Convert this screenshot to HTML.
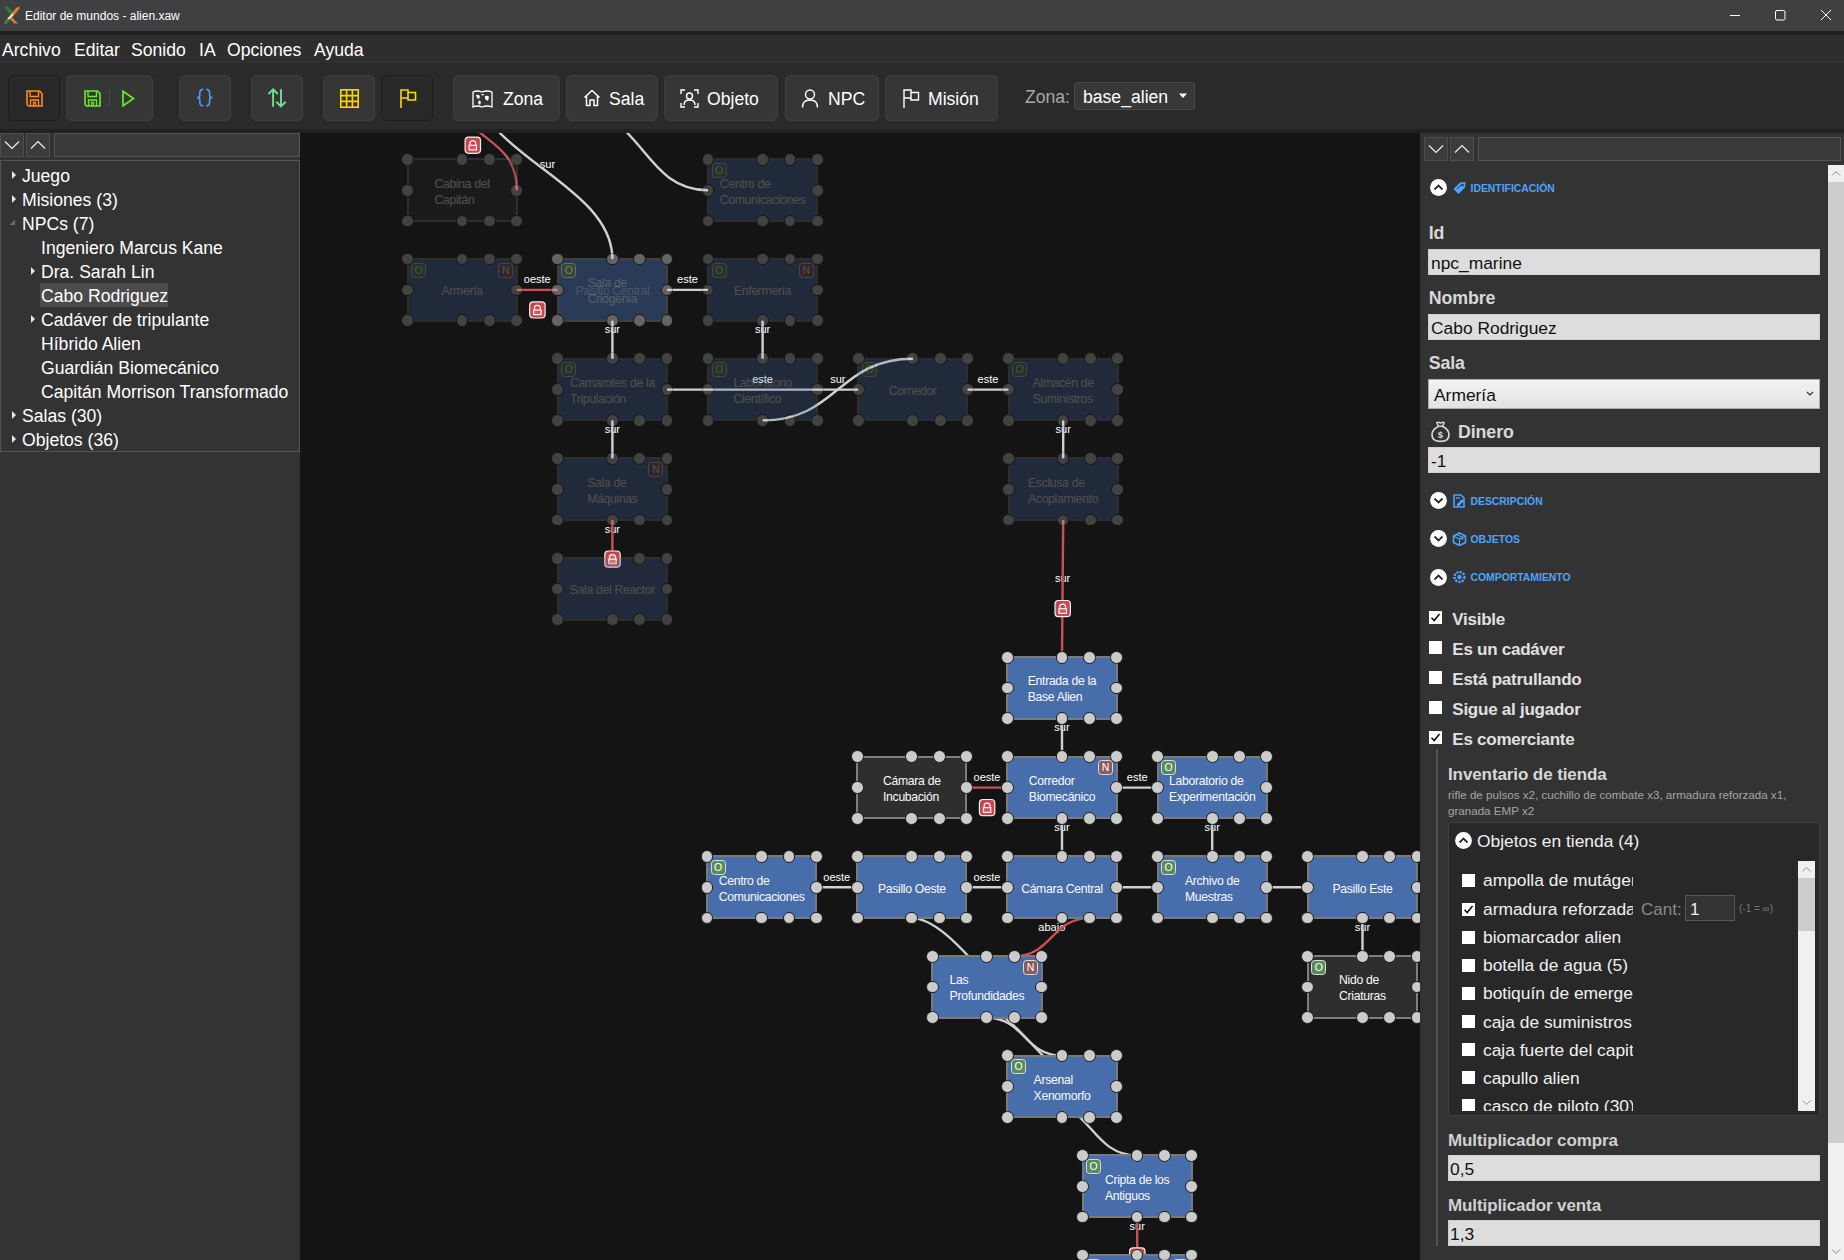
<!DOCTYPE html><html><head><meta charset="utf-8"><style>
*{box-sizing:border-box}
html,body{margin:0;padding:0}
body{width:1844px;height:1260px;overflow:hidden;position:relative;background:#141414;font-family:"Liberation Sans", sans-serif;color:#fff}
.a{position:absolute}
.t{position:absolute;white-space:pre;line-height:1}
</style></head><body>

<div class="a" style="left:0;top:0;width:1844px;height:31px;background:#3f4042"></div>
<div class="a" style="left:0;top:31px;width:1844px;height:4px;background:#1f1f1f"></div>
<svg class="a" style="left:3px;top:5px" width="18" height="20" viewBox="0 0 18 20">
<path d="M1 1.5 L5 1.5 L12 9 L9 12 Z" fill="#2e7d46"/>
<path d="M9 12 L13 16.5 L15.5 18.5 L11 18.5 L6.5 13 Z" fill="#e07a35"/>
<path d="M16 1.5 L17 3 L8 14 L4 18.5 L1 18.5 L3 15 L13 3 Z" fill="#e07a35"/>
<path d="M3 16.5 L10 9" stroke="#fff" stroke-width="1.2"/>
<path d="M1 18.5 L4 14 L8 14.5 L4 18.5 Z" fill="#2e7d46"/>
</svg>
<div class="t" style="left:25px;top:9.6px;font-size:12px;color:#fff">Editor de mundos - alien.xaw</div>
<svg class="a" style="left:1720px;top:0" width="124" height="31" viewBox="1720 0 124 31">
<line x1="1730" y1="15.5" x2="1740" y2="15.5" stroke="#fff" stroke-width="1"/>
<rect x="1775.5" y="10.5" width="9.5" height="9.5" rx="1.5" fill="none" stroke="#fff" stroke-width="1"/>
<path d="M1821 10 L1831 20 M1831 10 L1821 20" stroke="#fff" stroke-width="1"/>
</svg>
<div class="a" style="left:0;top:35px;width:1844px;height:28px;background:#2e2e2e"></div>
<div class="t" style="left:2px;top:42px;font-size:17.6px;color:#fff">Archivo</div>
<div class="t" style="left:74px;top:42px;font-size:17.6px;color:#fff">Editar</div>
<div class="t" style="left:131px;top:42px;font-size:17.6px;color:#fff">Sonido</div>
<div class="t" style="left:199px;top:42px;font-size:17.6px;color:#fff">IA</div>
<div class="t" style="left:227px;top:42px;font-size:17.6px;color:#fff">Opciones</div>
<div class="t" style="left:314px;top:42px;font-size:17.6px;color:#fff">Ayuda</div>
<div class="a" style="left:0;top:63px;width:1844px;height:66px;background:#2a2a2a"></div>
<div class="a" style="left:0;top:129px;width:1844px;height:4px;background:#212121"></div>
<div class="a" style="left:8px;top:75px;width:52px;height:46px;background:#282828;border:1px solid #1d1d1d;border-radius:5px"></div>
<div class="a" style="left:66px;top:75px;width:87px;height:46px;background:#363636;border:1px solid #3e3e3e;border-radius:5px"></div>
<div class="a" style="left:179px;top:75px;width:52px;height:46px;background:#363636;border:1px solid #3e3e3e;border-radius:5px"></div>
<div class="a" style="left:251px;top:75px;width:52px;height:46px;background:#363636;border:1px solid #3e3e3e;border-radius:5px"></div>
<div class="a" style="left:323px;top:75px;width:52px;height:46px;background:#363636;border:1px solid #3e3e3e;border-radius:5px"></div>
<div class="a" style="left:381px;top:75px;width:52px;height:46px;background:#282828;border:1px solid #1d1d1d;border-radius:5px"></div>
<div class="a" style="left:453px;top:75px;width:107px;height:46px;background:#363636;border:1px solid #3e3e3e;border-radius:5px"></div>
<div class="a" style="left:566px;top:75px;width:92px;height:46px;background:#363636;border:1px solid #3e3e3e;border-radius:5px"></div>
<div class="a" style="left:664px;top:75px;width:114px;height:46px;background:#363636;border:1px solid #3e3e3e;border-radius:5px"></div>
<div class="a" style="left:785px;top:75px;width:94px;height:46px;background:#363636;border:1px solid #3e3e3e;border-radius:5px"></div>
<div class="a" style="left:885px;top:75px;width:113px;height:46px;background:#363636;border:1px solid #3e3e3e;border-radius:5px"></div>
<svg class="a" style="left:26px;top:90px" width="17" height="17" viewBox="0 0 17 17">
<path d="M1 1 H13.5 L16 3.5 V16 H2.5 L1 14.5 Z" fill="none" stroke="#ff8c1a" stroke-width="1.6"/>
<path d="M4 1 V6.5 H12.5 V1" fill="none" stroke="#ff8c1a" stroke-width="1.4"/>
<path d="M4.5 16 V10 H12.5 V16 M7.5 16 V12.5 H9.5 V16" fill="none" stroke="#ff8c1a" stroke-width="1.3"/>
</svg>
<svg class="a" style="left:84px;top:90px" width="17" height="17" viewBox="0 0 17 17">
<path d="M1 1 H13.5 L16 3.5 V16 H2.5 L1 14.5 Z" fill="none" stroke="#66ee22" stroke-width="1.6"/>
<path d="M4 1 V6.5 H12.5 V1" fill="none" stroke="#66ee22" stroke-width="1.4"/>
<path d="M4.5 16 V10 H12.5 V16 M7.5 16 V12.5 H9.5 V16" fill="none" stroke="#66ee22" stroke-width="1.3"/>
</svg>
<div class="a" style="left:109px;top:89px;width:1px;height:18px;background:#4a4a4a"></div>
<svg class="a" style="left:122px;top:90px" width="13" height="17" viewBox="0 0 13 17"><path d="M1 1.2 L11.5 8.5 L1 15.8 Z" fill="none" stroke="#66ee22" stroke-width="1.7" stroke-linejoin="miter"/></svg>
<svg class="a" style="left:194px;top:87px" width="22" height="22" viewBox="194 87 22 22">
<path d="M203.2 89.4 Q199.8 89.6 199.8 93 V95.5 Q199.8 97.6 197 97.6 Q199.8 97.6 199.8 99.7 V102.2 Q199.8 105.6 203.2 105.8" fill="none" stroke="#4f94f5" stroke-width="1.7"/>
<path d="M206.2 89.4 Q209.6 89.6 209.6 93 V95.5 Q209.6 97.6 212.4 97.6 Q209.6 97.6 209.6 99.7 V102.2 Q209.6 105.6 206.2 105.8" fill="none" stroke="#4f94f5" stroke-width="1.7"/>
</svg>
<svg class="a" style="left:264px;top:85px" width="26" height="26" viewBox="264 85 26 26">
<path d="M273.1 106.7 V90 M268.4 94 L273.1 89.4 L277.8 94" fill="none" stroke="#6fe08c" stroke-width="1.9"/>
<path d="M281 89.2 V106 M276.3 101.8 L281 106.4 L285.7 101.8" fill="none" stroke="#6fe08c" stroke-width="1.9"/>
</svg>
<svg class="a" style="left:340px;top:89px" width="19" height="19" viewBox="0 0 19 19">
<rect x="0.8" y="0.8" width="17.4" height="17.4" fill="none" stroke="#ffd500" stroke-width="1.6"/>
<path d="M6.6 0.8 V18.2 M12.4 0.8 V18.2 M0.8 6.6 H18.2 M0.8 12.4 H18.2" stroke="#ffd500" stroke-width="1.6"/>
</svg>
<svg class="a" style="left:400px;top:89px" width="17" height="19" viewBox="0 0 17 19">
<path d="M1 19 V1 H8 V3.5 H15.5 V11 H8 V9 H1" fill="none" stroke="#ffd500" stroke-width="1.6"/>
<path d="M8 3.5 V9" stroke="#ffd500" stroke-width="1.6"/>
</svg>
<svg class="a" style="left:472px;top:90px" width="21" height="19" viewBox="0 0 21 19">
<path d="M1 2 Q5 0 10 2 Q15 0 20 2 V17 Q15 15 10 17 Q5 15 1 17 Z" fill="none" stroke="#fff" stroke-width="1.3"/>
<path d="M4 5 Q6 4 8 6 L7 9 L5 8 Z M9 4 L12 4 L11 6 Z M13 6 Q16 5 17 7 L16 11 L13 9 Z M7 10 L9 12 L8 15 L6 13 Z" fill="#fff"/>
</svg>
<div class="t" style="left:503px;top:91px;font-size:17.6px">Zona</div>
<svg class="a" style="left:583px;top:89px" width="18" height="18" viewBox="0 0 18 18">
<path d="M1.5 8.5 L9 1.5 L16.5 8.5 M3.5 7 V16.5 H7 V11 H11 V16.5 H14.5 V7" fill="none" stroke="#fff" stroke-width="1.5" stroke-linejoin="round"/>
</svg>
<div class="t" style="left:609px;top:91px;font-size:17.6px">Sala</div>
<svg class="a" style="left:680px;top:89px" width="19" height="19" viewBox="0 0 19 19">
<path d="M1 5 V1 H5 M14 1 H18 V5 M18 14 V18 H14 M5 18 H1 V14" fill="none" stroke="#fff" stroke-width="1.4"/>
<circle cx="9.5" cy="7" r="3" fill="none" stroke="#fff" stroke-width="1.4"/>
<path d="M4 16 Q4 11 9.5 11 Q15 11 15 16" fill="none" stroke="#fff" stroke-width="1.4"/>
</svg>
<div class="t" style="left:707px;top:91px;font-size:17.6px">Objeto</div>
<svg class="a" style="left:801px;top:89px" width="18" height="19" viewBox="0 0 18 19">
<circle cx="9" cy="5.5" r="4.5" fill="none" stroke="#fff" stroke-width="1.4"/>
<path d="M1.5 18.5 Q1.5 11 9 11 Q16.5 11 16.5 18.5" fill="none" stroke="#fff" stroke-width="1.4"/>
</svg>
<div class="t" style="left:828px;top:91px;font-size:17.6px">NPC</div>
<svg class="a" style="left:903px;top:89px" width="17" height="19" viewBox="0 0 17 19">
<path d="M1 19 V1 H8 V3.5 H15.5 V11 H8 V9 H1 M8 3.5 V9" fill="none" stroke="#fff" stroke-width="1.4"/>
</svg>
<div class="t" style="left:928px;top:91px;font-size:17.6px">Misión</div>
<div class="t" style="left:1025px;top:88.5px;font-size:17.6px;color:#a8a8a8">Zona:</div>
<div class="a" style="left:1074px;top:82px;width:121px;height:28px;background:#383838;border:1px solid #4a4a4a;border-radius:3px"></div>
<div class="t" style="left:1083px;top:88.5px;font-size:17.6px">base_alien</div>
<svg class="a" style="left:1178px;top:93px" width="10" height="6" viewBox="0 0 10 6"><path d="M1 0.5 L9 0.5 L5 5 Z" fill="#fff"/></svg>
<div class="a" style="left:0;top:133px;width:300px;height:1127px;background:#333333"></div>
<div class="a" style="left:0px;top:133px;width:24px;height:24px;background:#3c3c3c;border:1px solid #4e4e4e"></div>
<div class="a" style="left:26px;top:133px;width:24px;height:24px;background:#3c3c3c;border:1px solid #4e4e4e"></div>
<svg class="a" style="left:0px;top:133px" width="50" height="24" viewBox="0 0 50 24"><path d="M5 8.5 L12 15.5 L19 8.5" fill="none" stroke="#f0f0f0" stroke-width="1.2"/><path d="M31 15.5 L38 8.5 L45 15.5" fill="none" stroke="#f0f0f0" stroke-width="1.2"/></svg>
<div class="a" style="left:54px;top:133px;width:246px;height:24px;background:#3a3a3a;border:1px solid #555"></div>
<div class="a" style="left:0;top:160px;width:300px;height:292px;background:#333;border:1px solid #555"></div>
<svg class="a" style="left:11px;top:170px" width="6" height="10" viewBox="0 0 6 10"><path d="M1 1 L5 5 L1 9 Z" fill="#e6e6e6"/></svg>
<div class="t" style="left:22px;top:168px;font-size:17.6px;color:#fff">Juego</div>
<svg class="a" style="left:11px;top:194px" width="6" height="10" viewBox="0 0 6 10"><path d="M1 1 L5 5 L1 9 Z" fill="#e6e6e6"/></svg>
<div class="t" style="left:22px;top:192px;font-size:17.6px;color:#fff">Misiones (3)</div>
<svg class="a" style="left:9px;top:219px" width="7" height="7" viewBox="0 0 7 7"><path d="M6 0.5 L6 6 L0.5 6 Z" fill="#6a6a6a"/></svg>
<div class="t" style="left:22px;top:216px;font-size:17.6px;color:#fff">NPCs (7)</div>
<div class="t" style="left:41px;top:240px;font-size:17.6px;color:#fff">Ingeniero Marcus Kane</div>
<svg class="a" style="left:30px;top:266px" width="6" height="10" viewBox="0 0 6 10"><path d="M1 1 L5 5 L1 9 Z" fill="#e6e6e6"/></svg>
<div class="t" style="left:41px;top:264px;font-size:17.6px;color:#fff">Dra. Sarah Lin</div>
<div class="a" style="left:40px;top:283px;width:128px;height:24px;background:#4b4b4b"></div>
<div class="t" style="left:41px;top:288px;font-size:17.6px;color:#fff">Cabo Rodriguez</div>
<svg class="a" style="left:30px;top:314px" width="6" height="10" viewBox="0 0 6 10"><path d="M1 1 L5 5 L1 9 Z" fill="#e6e6e6"/></svg>
<div class="t" style="left:41px;top:312px;font-size:17.6px;color:#fff">Cadáver de tripulante</div>
<div class="t" style="left:41px;top:336px;font-size:17.6px;color:#fff">Híbrido Alien</div>
<div class="t" style="left:41px;top:360px;font-size:17.6px;color:#fff">Guardián Biomecánico</div>
<div class="t" style="left:41px;top:384px;font-size:17.6px;color:#fff">Capitán Morrison Transformado</div>
<svg class="a" style="left:11px;top:410px" width="6" height="10" viewBox="0 0 6 10"><path d="M1 1 L5 5 L1 9 Z" fill="#e6e6e6"/></svg>
<div class="t" style="left:22px;top:408px;font-size:17.6px;color:#fff">Salas (30)</div>
<svg class="a" style="left:11px;top:434px" width="6" height="10" viewBox="0 0 6 10"><path d="M1 1 L5 5 L1 9 Z" fill="#e6e6e6"/></svg>
<div class="t" style="left:22px;top:432px;font-size:17.6px;color:#fff">Objetos (36)</div>
<div class="a" style="left:300px;top:133px;width:1120px;height:1127px;overflow:hidden;background:#141414">
<svg class="a" style="left:0;top:0" width="1120" height="1127" viewBox="300 133 1120 1127">
<text x="547.5" y="168.3" text-anchor="middle" font-family="Liberation Sans" font-size="11" fill="#fff" stroke="#141414" stroke-width="0.6" paint-order="stroke">sur</text>
<text x="537.3" y="283.4" text-anchor="middle" font-family="Liberation Sans" font-size="11" fill="#fff" stroke="#141414" stroke-width="0.6" paint-order="stroke">oeste</text>
<text x="687.5" y="283.4" text-anchor="middle" font-family="Liberation Sans" font-size="11" fill="#fff" stroke="#141414" stroke-width="0.6" paint-order="stroke">este</text>
<text x="612.4" y="333.2" text-anchor="middle" font-family="Liberation Sans" font-size="11" fill="#fff" stroke="#141414" stroke-width="0.6" paint-order="stroke">sur</text>
<text x="762.6" y="333.2" text-anchor="middle" font-family="Liberation Sans" font-size="11" fill="#fff" stroke="#141414" stroke-width="0.6" paint-order="stroke">sur</text>
<text x="762.6" y="383.1" text-anchor="middle" font-family="Liberation Sans" font-size="11" fill="#fff" stroke="#141414" stroke-width="0.6" paint-order="stroke">este</text>
<text x="837.8" y="383.1" text-anchor="middle" font-family="Liberation Sans" font-size="11" fill="#fff" stroke="#141414" stroke-width="0.6" paint-order="stroke">sur</text>
<text x="988.0" y="383.1" text-anchor="middle" font-family="Liberation Sans" font-size="11" fill="#fff" stroke="#141414" stroke-width="0.6" paint-order="stroke">este</text>
<text x="612.4" y="432.9" text-anchor="middle" font-family="Liberation Sans" font-size="11" fill="#fff" stroke="#141414" stroke-width="0.6" paint-order="stroke">sur</text>
<text x="1063.2" y="432.9" text-anchor="middle" font-family="Liberation Sans" font-size="11" fill="#fff" stroke="#141414" stroke-width="0.6" paint-order="stroke">sur</text>
<text x="612.4" y="532.6" text-anchor="middle" font-family="Liberation Sans" font-size="11" fill="#fff" stroke="#141414" stroke-width="0.6" paint-order="stroke">sur</text>
<text x="1062.6" y="582.1" text-anchor="middle" font-family="Liberation Sans" font-size="11" fill="#fff" stroke="#141414" stroke-width="0.6" paint-order="stroke">sur</text>
<text x="1062.0" y="731.3" text-anchor="middle" font-family="Liberation Sans" font-size="11" fill="#fff" stroke="#141414" stroke-width="0.6" paint-order="stroke">sur</text>
<text x="987.0" y="781.1" text-anchor="middle" font-family="Liberation Sans" font-size="11" fill="#fff" stroke="#141414" stroke-width="0.6" paint-order="stroke">oeste</text>
<text x="1137.2" y="781.1" text-anchor="middle" font-family="Liberation Sans" font-size="11" fill="#fff" stroke="#141414" stroke-width="0.6" paint-order="stroke">este</text>
<text x="1062.0" y="830.9" text-anchor="middle" font-family="Liberation Sans" font-size="11" fill="#fff" stroke="#141414" stroke-width="0.6" paint-order="stroke">sur</text>
<text x="1212.2" y="830.9" text-anchor="middle" font-family="Liberation Sans" font-size="11" fill="#fff" stroke="#141414" stroke-width="0.6" paint-order="stroke">sur</text>
<text x="836.8" y="880.8" text-anchor="middle" font-family="Liberation Sans" font-size="11" fill="#fff" stroke="#141414" stroke-width="0.6" paint-order="stroke">oeste</text>
<text x="987.0" y="880.8" text-anchor="middle" font-family="Liberation Sans" font-size="11" fill="#fff" stroke="#141414" stroke-width="0.6" paint-order="stroke">oeste</text>
<text x="1362.5" y="930.6" text-anchor="middle" font-family="Liberation Sans" font-size="11" fill="#fff" stroke="#141414" stroke-width="0.6" paint-order="stroke">sur</text>
<text x="1051.8" y="930.6" text-anchor="middle" font-family="Liberation Sans" font-size="11" fill="#fff" stroke="#141414" stroke-width="0.6" paint-order="stroke">abajo</text>
<text x="1137.2" y="1229.5" text-anchor="middle" font-family="Liberation Sans" font-size="11" fill="#fff" stroke="#141414" stroke-width="0.6" paint-order="stroke">sur</text>
<path d="M457,86 C457,144 516.8,132.15 516.8,190.15" fill="none" stroke="#cb5054" stroke-width="2.4"/>
<path d="M473,78 C473,154 612.4,183 612.4,259" fill="none" stroke="#d0d0d0" stroke-width="2.4"/>
<path d="M577,110 C642.5,110 642.5,190.2 708,190.2" fill="none" stroke="#d0d0d0" stroke-width="2.4"/>
<path d="M516.8,289.9 L557.8,289.9" fill="none" stroke="#cb5054" stroke-width="2.4"/>
<path d="M667.0,289.9 L708.0,289.9" fill="none" stroke="#d0d0d0" stroke-width="2.4"/>
<path d="M612.4,320.7 L612.4,358.7" fill="none" stroke="#d0d0d0" stroke-width="2.4"/>
<path d="M762.6,320.7 L762.6,358.7" fill="none" stroke="#d0d0d0" stroke-width="2.4"/>
<path d="M667.0,389.6 L858.2,389.6" fill="none" stroke="#d0d0d0" stroke-width="2.4"/>
<path d="M762.6,420.4 C837.8,420.4 837.8,358.7 912.9,358.7" fill="none" stroke="#d0d0d0" stroke-width="2.4"/>
<path d="M967.5,389.6 L1008.5,389.6" fill="none" stroke="#d0d0d0" stroke-width="2.4"/>
<path d="M612.4,420.4 L612.4,458.4" fill="none" stroke="#d0d0d0" stroke-width="2.4"/>
<path d="M1063.2,420.4 L1063.2,458.4" fill="none" stroke="#d0d0d0" stroke-width="2.4"/>
<path d="M612.4,520.1 L612.4,558.1" fill="none" stroke="#cb5054" stroke-width="2.4"/>
<path d="M1063.2,520.1 L1062.0,657.1" fill="none" stroke="#cb5054" stroke-width="2.4"/>
<path d="M1062.0,718.8 L1062.0,756.8" fill="none" stroke="#d0d0d0" stroke-width="2.4"/>
<path d="M966.5,787.6 L1007.4,787.6" fill="none" stroke="#cb5054" stroke-width="2.4"/>
<path d="M1116.7,787.6 L1157.6,787.6" fill="none" stroke="#d0d0d0" stroke-width="2.4"/>
<path d="M1062.0,818.5 L1062.0,856.4" fill="none" stroke="#d0d0d0" stroke-width="2.4"/>
<path d="M1212.2,818.5 L1212.2,856.4" fill="none" stroke="#d0d0d0" stroke-width="2.4"/>
<path d="M816.3,887.3 L857.2,887.3" fill="none" stroke="#d0d0d0" stroke-width="2.4"/>
<path d="M966.5,887.3 L1007.4,887.3" fill="none" stroke="#d0d0d0" stroke-width="2.4"/>
<path d="M1116.7,887.3 L1157.6,887.3" fill="none" stroke="#d0d0d0" stroke-width="2.4"/>
<path d="M1266.9,887.3 L1307.8,887.3" fill="none" stroke="#d0d0d0" stroke-width="2.4"/>
<path d="M1362.5,918.1 L1362.5,956.1" fill="none" stroke="#d0d0d0" stroke-width="2.4"/>
<path d="M911.85,918.1 C943.7,918.1 983.6,978.1 986.9,973.4" fill="none" stroke="#d0d0d0" stroke-width="2.4"/>
<path d="M1014.3,956.1 C1051.8,956.1 1051.8,918.1 1089.4,918.1" fill="none" stroke="#cb5054" stroke-width="2.4"/>
<path d="M986.9,1017.8 C1024.5,1017.8 1024.5,1055.7 1062.0,1055.7" fill="none" stroke="#d0d0d0" stroke-width="2.4"/>
<path d="M935,991.7 C1015.3,991.7 1029.9,1066.0 1091.6,1091.2" fill="none" stroke="#d0d0d0" stroke-width="2.4"/>
<path d="M1045,1102.7 C1091.1,1102.7 1091.1,1155.35 1137.15,1155.35" fill="none" stroke="#d0d0d0" stroke-width="2.4"/>
<path d="M1137.2,1217.0 L1137.2,1255.0" fill="none" stroke="#cb5054" stroke-width="2.4"/>
<g transform="translate(464.5,136.5)"><rect x="0.6" y="0.6" width="15.4" height="16.2" rx="3.5" fill="#c9474d" stroke="#f2f2f2" stroke-width="1.2"/><path d="M5.4 8.8 V6.6 Q5.4 4.2 8.3 4.2 Q11.2 4.2 11.2 6.6 V8.8" fill="none" stroke="#fff" stroke-width="1.1"/><rect x="4.6" y="8.8" width="7.4" height="4.6" fill="#cf5a5e" stroke="#fff" stroke-width="1.1"/></g>
<g transform="translate(529.1,301.2)"><rect x="0.6" y="0.6" width="15.4" height="16.2" rx="3.5" fill="#c9474d" stroke="#f2f2f2" stroke-width="1.2"/><path d="M5.4 8.8 V6.6 Q5.4 4.2 8.3 4.2 Q11.2 4.2 11.2 6.6 V8.8" fill="none" stroke="#fff" stroke-width="1.1"/><rect x="4.6" y="8.8" width="7.4" height="4.6" fill="#cf5a5e" stroke="#fff" stroke-width="1.1"/></g>
<g transform="translate(604.2,550.4)"><rect x="0.6" y="0.6" width="15.4" height="16.2" rx="3.5" fill="#c9474d" stroke="#f2f2f2" stroke-width="1.2"/><path d="M5.4 8.8 V6.6 Q5.4 4.2 8.3 4.2 Q11.2 4.2 11.2 6.6 V8.8" fill="none" stroke="#fff" stroke-width="1.1"/><rect x="4.6" y="8.8" width="7.4" height="4.6" fill="#cf5a5e" stroke="#fff" stroke-width="1.1"/></g>
<g transform="translate(1054.4,599.9)"><rect x="0.6" y="0.6" width="15.4" height="16.2" rx="3.5" fill="#c9474d" stroke="#f2f2f2" stroke-width="1.2"/><path d="M5.4 8.8 V6.6 Q5.4 4.2 8.3 4.2 Q11.2 4.2 11.2 6.6 V8.8" fill="none" stroke="#fff" stroke-width="1.1"/><rect x="4.6" y="8.8" width="7.4" height="4.6" fill="#cf5a5e" stroke="#fff" stroke-width="1.1"/></g>
<g transform="translate(978.8,798.9)"><rect x="0.6" y="0.6" width="15.4" height="16.2" rx="3.5" fill="#c9474d" stroke="#f2f2f2" stroke-width="1.2"/><path d="M5.4 8.8 V6.6 Q5.4 4.2 8.3 4.2 Q11.2 4.2 11.2 6.6 V8.8" fill="none" stroke="#fff" stroke-width="1.1"/><rect x="4.6" y="8.8" width="7.4" height="4.6" fill="#cf5a5e" stroke="#fff" stroke-width="1.1"/></g>
<g transform="translate(1129.0,1247.3)"><rect x="0.6" y="0.6" width="15.4" height="16.2" rx="3.5" fill="#c9474d" stroke="#f2f2f2" stroke-width="1.2"/><path d="M5.4 8.8 V6.6 Q5.4 4.2 8.3 4.2 Q11.2 4.2 11.2 6.6 V8.8" fill="none" stroke="#fff" stroke-width="1.1"/><rect x="4.6" y="8.8" width="7.4" height="4.6" fill="#cf5a5e" stroke="#fff" stroke-width="1.1"/></g>
</svg>
<div class="a" style="left:107.5px;top:26.3px;width:109.3px;height:61.7px;opacity:0.25;"><div class="a" style="left:-1px;top:-1px;width:111.3px;height:63.7px;background:#2e2e2e;border:2px solid #7e7e7e"></div><div class="a" style="left:0;top:0;width:109.3px;height:61.7px;display:flex;align-items:center;justify-content:center"><div style="font-size:12.2px;letter-spacing:-0.3px;line-height:16px;text-align:left;color:#fafafa;white-space:nowrap;padding-top:3px">Cabina del<br>Capitán</div></div><div class="a" style="left:-6.4px;top:-6.4px;width:12.8px;height:12.8px;border-radius:50%;background:#cbcbcb;border:1.6px solid #1e1e1e"></div><div class="a" style="left:48.2px;top:-6.4px;width:12.8px;height:12.8px;border-radius:50%;background:#cbcbcb;border:1.6px solid #1e1e1e"></div><div class="a" style="left:75.6px;top:-6.4px;width:12.8px;height:12.8px;border-radius:50%;background:#cbcbcb;border:1.6px solid #1e1e1e"></div><div class="a" style="left:102.9px;top:-6.4px;width:12.8px;height:12.8px;border-radius:50%;background:#cbcbcb;border:1.6px solid #1e1e1e"></div><div class="a" style="left:-6.4px;top:24.5px;width:12.8px;height:12.8px;border-radius:50%;background:#cbcbcb;border:1.6px solid #1e1e1e"></div><div class="a" style="left:102.9px;top:24.5px;width:12.8px;height:12.8px;border-radius:50%;background:#cbcbcb;border:1.6px solid #1e1e1e"></div><div class="a" style="left:-6.4px;top:55.3px;width:12.8px;height:12.8px;border-radius:50%;background:#cbcbcb;border:1.6px solid #1e1e1e"></div><div class="a" style="left:48.2px;top:55.3px;width:12.8px;height:12.8px;border-radius:50%;background:#cbcbcb;border:1.6px solid #1e1e1e"></div><div class="a" style="left:75.6px;top:55.3px;width:12.8px;height:12.8px;border-radius:50%;background:#cbcbcb;border:1.6px solid #1e1e1e"></div><div class="a" style="left:102.9px;top:55.3px;width:12.8px;height:12.8px;border-radius:50%;background:#cbcbcb;border:1.6px solid #1e1e1e"></div></div>
<div class="a" style="left:408.0px;top:26.3px;width:109.3px;height:61.7px;opacity:0.25;"><div class="a" style="left:-1px;top:-1px;width:111.3px;height:63.7px;background:#476dab;border:2px solid #7a7a7a"></div><div class="a" style="left:3.6px;top:3.6px;width:15px;height:15px;background:#5a8c59;border:1px solid #dcdcdc;border-radius:3.5px;font-size:10.5px;line-height:13px;text-align:center;color:#fff">O</div><div class="a" style="left:0;top:0;width:109.3px;height:61.7px;display:flex;align-items:center;justify-content:center"><div style="font-size:12.2px;letter-spacing:-0.3px;line-height:16px;text-align:left;color:#fafafa;white-space:nowrap;padding-top:3px">Centro de<br>Comunicaciones</div></div><div class="a" style="left:-6.4px;top:-6.4px;width:12.8px;height:12.8px;border-radius:50%;background:#cbcbcb;border:1.6px solid #1e1e1e"></div><div class="a" style="left:48.2px;top:-6.4px;width:12.8px;height:12.8px;border-radius:50%;background:#cbcbcb;border:1.6px solid #1e1e1e"></div><div class="a" style="left:75.6px;top:-6.4px;width:12.8px;height:12.8px;border-radius:50%;background:#cbcbcb;border:1.6px solid #1e1e1e"></div><div class="a" style="left:102.9px;top:-6.4px;width:12.8px;height:12.8px;border-radius:50%;background:#cbcbcb;border:1.6px solid #1e1e1e"></div><div class="a" style="left:-6.4px;top:24.5px;width:12.8px;height:12.8px;border-radius:50%;background:#cbcbcb;border:1.6px solid #1e1e1e"></div><div class="a" style="left:102.9px;top:24.5px;width:12.8px;height:12.8px;border-radius:50%;background:#cbcbcb;border:1.6px solid #1e1e1e"></div><div class="a" style="left:-6.4px;top:55.3px;width:12.8px;height:12.8px;border-radius:50%;background:#cbcbcb;border:1.6px solid #1e1e1e"></div><div class="a" style="left:48.2px;top:55.3px;width:12.8px;height:12.8px;border-radius:50%;background:#cbcbcb;border:1.6px solid #1e1e1e"></div><div class="a" style="left:75.6px;top:55.3px;width:12.8px;height:12.8px;border-radius:50%;background:#cbcbcb;border:1.6px solid #1e1e1e"></div><div class="a" style="left:102.9px;top:55.3px;width:12.8px;height:12.8px;border-radius:50%;background:#cbcbcb;border:1.6px solid #1e1e1e"></div></div>
<div class="a" style="left:107.5px;top:126.0px;width:109.3px;height:61.7px;opacity:0.25;"><div class="a" style="left:-1px;top:-1px;width:111.3px;height:63.7px;background:#476dab;border:2px solid #7a7a7a"></div><div class="a" style="left:3.6px;top:3.6px;width:15px;height:15px;background:#5a8c59;border:1px solid #dcdcdc;border-radius:3.5px;font-size:10.5px;line-height:13px;text-align:center;color:#fff">O</div><div class="a" style="left:90.7px;top:3.6px;width:15px;height:15px;background:#8c5a5a;border:1px solid #dcdcdc;border-radius:3.5px;font-size:10.5px;line-height:13px;text-align:center;color:#fff">N</div><div class="a" style="left:0;top:0;width:109.3px;height:61.7px;display:flex;align-items:center;justify-content:center"><div style="font-size:12.2px;letter-spacing:-0.3px;line-height:16px;text-align:left;color:#fafafa;white-space:nowrap;padding-top:3px">Armería</div></div><div class="a" style="left:-6.4px;top:-6.4px;width:12.8px;height:12.8px;border-radius:50%;background:#cbcbcb;border:1.6px solid #1e1e1e"></div><div class="a" style="left:48.2px;top:-6.4px;width:12.8px;height:12.8px;border-radius:50%;background:#cbcbcb;border:1.6px solid #1e1e1e"></div><div class="a" style="left:75.6px;top:-6.4px;width:12.8px;height:12.8px;border-radius:50%;background:#cbcbcb;border:1.6px solid #1e1e1e"></div><div class="a" style="left:102.9px;top:-6.4px;width:12.8px;height:12.8px;border-radius:50%;background:#cbcbcb;border:1.6px solid #1e1e1e"></div><div class="a" style="left:-6.4px;top:24.5px;width:12.8px;height:12.8px;border-radius:50%;background:#cbcbcb;border:1.6px solid #1e1e1e"></div><div class="a" style="left:102.9px;top:24.5px;width:12.8px;height:12.8px;border-radius:50%;background:#cbcbcb;border:1.6px solid #1e1e1e"></div><div class="a" style="left:-6.4px;top:55.3px;width:12.8px;height:12.8px;border-radius:50%;background:#cbcbcb;border:1.6px solid #1e1e1e"></div><div class="a" style="left:48.2px;top:55.3px;width:12.8px;height:12.8px;border-radius:50%;background:#cbcbcb;border:1.6px solid #1e1e1e"></div><div class="a" style="left:75.6px;top:55.3px;width:12.8px;height:12.8px;border-radius:50%;background:#cbcbcb;border:1.6px solid #1e1e1e"></div><div class="a" style="left:102.9px;top:55.3px;width:12.8px;height:12.8px;border-radius:50%;background:#cbcbcb;border:1.6px solid #1e1e1e"></div></div>
<div class="a" style="left:257.8px;top:126.0px;width:109.3px;height:61.7px;opacity:0.25;"><div class="a" style="left:-1px;top:-1px;width:111.3px;height:63.7px;background:#476dab;border:2px solid #7a7a7a"></div><div class="a" style="left:3.6px;top:3.6px;width:15px;height:15px;background:#5a8c59;border:1px solid #dcdcdc;border-radius:3.5px;font-size:10.5px;line-height:13px;text-align:center;color:#fff">O</div><div class="a" style="left:0;top:0;width:109.3px;height:61.7px;display:flex;align-items:center;justify-content:center"><div style="font-size:12.2px;letter-spacing:-0.3px;line-height:16px;text-align:left;color:#fafafa;white-space:nowrap;padding-top:3px">Pasillo Central</div></div><div class="a" style="left:-6.4px;top:-6.4px;width:12.8px;height:12.8px;border-radius:50%;background:#cbcbcb;border:1.6px solid #1e1e1e"></div><div class="a" style="left:48.2px;top:-6.4px;width:12.8px;height:12.8px;border-radius:50%;background:#cbcbcb;border:1.6px solid #1e1e1e"></div><div class="a" style="left:75.6px;top:-6.4px;width:12.8px;height:12.8px;border-radius:50%;background:#cbcbcb;border:1.6px solid #1e1e1e"></div><div class="a" style="left:102.9px;top:-6.4px;width:12.8px;height:12.8px;border-radius:50%;background:#cbcbcb;border:1.6px solid #1e1e1e"></div><div class="a" style="left:-6.4px;top:24.5px;width:12.8px;height:12.8px;border-radius:50%;background:#cbcbcb;border:1.6px solid #1e1e1e"></div><div class="a" style="left:102.9px;top:24.5px;width:12.8px;height:12.8px;border-radius:50%;background:#cbcbcb;border:1.6px solid #1e1e1e"></div><div class="a" style="left:-6.4px;top:55.3px;width:12.8px;height:12.8px;border-radius:50%;background:#cbcbcb;border:1.6px solid #1e1e1e"></div><div class="a" style="left:48.2px;top:55.3px;width:12.8px;height:12.8px;border-radius:50%;background:#cbcbcb;border:1.6px solid #1e1e1e"></div><div class="a" style="left:75.6px;top:55.3px;width:12.8px;height:12.8px;border-radius:50%;background:#cbcbcb;border:1.6px solid #1e1e1e"></div><div class="a" style="left:102.9px;top:55.3px;width:12.8px;height:12.8px;border-radius:50%;background:#cbcbcb;border:1.6px solid #1e1e1e"></div></div>
<div class="a" style="left:257.8px;top:126.0px;width:109.3px;height:61.7px;opacity:0.25;"><div class="a" style="left:-1px;top:-1px;width:111.3px;height:63.7px;background:#476dab;border:2px solid #7a7a7a"></div><div class="a" style="left:3.6px;top:3.6px;width:15px;height:15px;background:#5a8c59;border:1px solid #dcdcdc;border-radius:3.5px;font-size:10.5px;line-height:13px;text-align:center;color:#fff">O</div><div class="a" style="left:0;top:0;width:109.3px;height:61.7px;display:flex;align-items:center;justify-content:center"><div style="font-size:12.2px;letter-spacing:-0.3px;line-height:16px;text-align:left;color:#fafafa;white-space:nowrap;padding-top:3px">Sala de<br>Criogenia</div></div><div class="a" style="left:-6.4px;top:-6.4px;width:12.8px;height:12.8px;border-radius:50%;background:#cbcbcb;border:1.6px solid #1e1e1e"></div><div class="a" style="left:48.2px;top:-6.4px;width:12.8px;height:12.8px;border-radius:50%;background:#cbcbcb;border:1.6px solid #1e1e1e"></div><div class="a" style="left:75.6px;top:-6.4px;width:12.8px;height:12.8px;border-radius:50%;background:#cbcbcb;border:1.6px solid #1e1e1e"></div><div class="a" style="left:102.9px;top:-6.4px;width:12.8px;height:12.8px;border-radius:50%;background:#cbcbcb;border:1.6px solid #1e1e1e"></div><div class="a" style="left:-6.4px;top:24.5px;width:12.8px;height:12.8px;border-radius:50%;background:#cbcbcb;border:1.6px solid #1e1e1e"></div><div class="a" style="left:102.9px;top:24.5px;width:12.8px;height:12.8px;border-radius:50%;background:#cbcbcb;border:1.6px solid #1e1e1e"></div><div class="a" style="left:-6.4px;top:55.3px;width:12.8px;height:12.8px;border-radius:50%;background:#cbcbcb;border:1.6px solid #1e1e1e"></div><div class="a" style="left:48.2px;top:55.3px;width:12.8px;height:12.8px;border-radius:50%;background:#cbcbcb;border:1.6px solid #1e1e1e"></div><div class="a" style="left:75.6px;top:55.3px;width:12.8px;height:12.8px;border-radius:50%;background:#cbcbcb;border:1.6px solid #1e1e1e"></div><div class="a" style="left:102.9px;top:55.3px;width:12.8px;height:12.8px;border-radius:50%;background:#cbcbcb;border:1.6px solid #1e1e1e"></div></div>
<div class="a" style="left:408.0px;top:126.0px;width:109.3px;height:61.7px;opacity:0.25;"><div class="a" style="left:-1px;top:-1px;width:111.3px;height:63.7px;background:#476dab;border:2px solid #7a7a7a"></div><div class="a" style="left:3.6px;top:3.6px;width:15px;height:15px;background:#5a8c59;border:1px solid #dcdcdc;border-radius:3.5px;font-size:10.5px;line-height:13px;text-align:center;color:#fff">O</div><div class="a" style="left:90.7px;top:3.6px;width:15px;height:15px;background:#8c5a5a;border:1px solid #dcdcdc;border-radius:3.5px;font-size:10.5px;line-height:13px;text-align:center;color:#fff">N</div><div class="a" style="left:0;top:0;width:109.3px;height:61.7px;display:flex;align-items:center;justify-content:center"><div style="font-size:12.2px;letter-spacing:-0.3px;line-height:16px;text-align:left;color:#fafafa;white-space:nowrap;padding-top:3px">Enfermería</div></div><div class="a" style="left:-6.4px;top:-6.4px;width:12.8px;height:12.8px;border-radius:50%;background:#cbcbcb;border:1.6px solid #1e1e1e"></div><div class="a" style="left:48.2px;top:-6.4px;width:12.8px;height:12.8px;border-radius:50%;background:#cbcbcb;border:1.6px solid #1e1e1e"></div><div class="a" style="left:75.6px;top:-6.4px;width:12.8px;height:12.8px;border-radius:50%;background:#cbcbcb;border:1.6px solid #1e1e1e"></div><div class="a" style="left:102.9px;top:-6.4px;width:12.8px;height:12.8px;border-radius:50%;background:#cbcbcb;border:1.6px solid #1e1e1e"></div><div class="a" style="left:-6.4px;top:24.5px;width:12.8px;height:12.8px;border-radius:50%;background:#cbcbcb;border:1.6px solid #1e1e1e"></div><div class="a" style="left:102.9px;top:24.5px;width:12.8px;height:12.8px;border-radius:50%;background:#cbcbcb;border:1.6px solid #1e1e1e"></div><div class="a" style="left:-6.4px;top:55.3px;width:12.8px;height:12.8px;border-radius:50%;background:#cbcbcb;border:1.6px solid #1e1e1e"></div><div class="a" style="left:48.2px;top:55.3px;width:12.8px;height:12.8px;border-radius:50%;background:#cbcbcb;border:1.6px solid #1e1e1e"></div><div class="a" style="left:75.6px;top:55.3px;width:12.8px;height:12.8px;border-radius:50%;background:#cbcbcb;border:1.6px solid #1e1e1e"></div><div class="a" style="left:102.9px;top:55.3px;width:12.8px;height:12.8px;border-radius:50%;background:#cbcbcb;border:1.6px solid #1e1e1e"></div></div>
<div class="a" style="left:257.8px;top:225.7px;width:109.3px;height:61.7px;opacity:0.25;"><div class="a" style="left:-1px;top:-1px;width:111.3px;height:63.7px;background:#476dab;border:2px solid #7a7a7a"></div><div class="a" style="left:3.6px;top:3.6px;width:15px;height:15px;background:#5a8c59;border:1px solid #dcdcdc;border-radius:3.5px;font-size:10.5px;line-height:13px;text-align:center;color:#fff">O</div><div class="a" style="left:0;top:0;width:109.3px;height:61.7px;display:flex;align-items:center;justify-content:center"><div style="font-size:12.2px;letter-spacing:-0.3px;line-height:16px;text-align:left;color:#fafafa;white-space:nowrap;padding-top:3px">Camarotes de la<br>Tripulación</div></div><div class="a" style="left:-6.4px;top:-6.4px;width:12.8px;height:12.8px;border-radius:50%;background:#cbcbcb;border:1.6px solid #1e1e1e"></div><div class="a" style="left:48.2px;top:-6.4px;width:12.8px;height:12.8px;border-radius:50%;background:#cbcbcb;border:1.6px solid #1e1e1e"></div><div class="a" style="left:75.6px;top:-6.4px;width:12.8px;height:12.8px;border-radius:50%;background:#cbcbcb;border:1.6px solid #1e1e1e"></div><div class="a" style="left:102.9px;top:-6.4px;width:12.8px;height:12.8px;border-radius:50%;background:#cbcbcb;border:1.6px solid #1e1e1e"></div><div class="a" style="left:-6.4px;top:24.5px;width:12.8px;height:12.8px;border-radius:50%;background:#cbcbcb;border:1.6px solid #1e1e1e"></div><div class="a" style="left:102.9px;top:24.5px;width:12.8px;height:12.8px;border-radius:50%;background:#cbcbcb;border:1.6px solid #1e1e1e"></div><div class="a" style="left:-6.4px;top:55.3px;width:12.8px;height:12.8px;border-radius:50%;background:#cbcbcb;border:1.6px solid #1e1e1e"></div><div class="a" style="left:48.2px;top:55.3px;width:12.8px;height:12.8px;border-radius:50%;background:#cbcbcb;border:1.6px solid #1e1e1e"></div><div class="a" style="left:75.6px;top:55.3px;width:12.8px;height:12.8px;border-radius:50%;background:#cbcbcb;border:1.6px solid #1e1e1e"></div><div class="a" style="left:102.9px;top:55.3px;width:12.8px;height:12.8px;border-radius:50%;background:#cbcbcb;border:1.6px solid #1e1e1e"></div></div>
<div class="a" style="left:408.0px;top:225.7px;width:109.3px;height:61.7px;opacity:0.25;"><div class="a" style="left:-1px;top:-1px;width:111.3px;height:63.7px;background:#476dab;border:2px solid #7a7a7a"></div><div class="a" style="left:3.6px;top:3.6px;width:15px;height:15px;background:#5a8c59;border:1px solid #dcdcdc;border-radius:3.5px;font-size:10.5px;line-height:13px;text-align:center;color:#fff">O</div><div class="a" style="left:0;top:0;width:109.3px;height:61.7px;display:flex;align-items:center;justify-content:center"><div style="font-size:12.2px;letter-spacing:-0.3px;line-height:16px;text-align:left;color:#fafafa;white-space:nowrap;padding-top:3px">Laboratorio<br>Científico</div></div><div class="a" style="left:-6.4px;top:-6.4px;width:12.8px;height:12.8px;border-radius:50%;background:#cbcbcb;border:1.6px solid #1e1e1e"></div><div class="a" style="left:48.2px;top:-6.4px;width:12.8px;height:12.8px;border-radius:50%;background:#cbcbcb;border:1.6px solid #1e1e1e"></div><div class="a" style="left:75.6px;top:-6.4px;width:12.8px;height:12.8px;border-radius:50%;background:#cbcbcb;border:1.6px solid #1e1e1e"></div><div class="a" style="left:102.9px;top:-6.4px;width:12.8px;height:12.8px;border-radius:50%;background:#cbcbcb;border:1.6px solid #1e1e1e"></div><div class="a" style="left:-6.4px;top:24.5px;width:12.8px;height:12.8px;border-radius:50%;background:#cbcbcb;border:1.6px solid #1e1e1e"></div><div class="a" style="left:102.9px;top:24.5px;width:12.8px;height:12.8px;border-radius:50%;background:#cbcbcb;border:1.6px solid #1e1e1e"></div><div class="a" style="left:-6.4px;top:55.3px;width:12.8px;height:12.8px;border-radius:50%;background:#cbcbcb;border:1.6px solid #1e1e1e"></div><div class="a" style="left:48.2px;top:55.3px;width:12.8px;height:12.8px;border-radius:50%;background:#cbcbcb;border:1.6px solid #1e1e1e"></div><div class="a" style="left:75.6px;top:55.3px;width:12.8px;height:12.8px;border-radius:50%;background:#cbcbcb;border:1.6px solid #1e1e1e"></div><div class="a" style="left:102.9px;top:55.3px;width:12.8px;height:12.8px;border-radius:50%;background:#cbcbcb;border:1.6px solid #1e1e1e"></div></div>
<div class="a" style="left:558.2px;top:225.7px;width:109.3px;height:61.7px;opacity:0.25;"><div class="a" style="left:-1px;top:-1px;width:111.3px;height:63.7px;background:#476dab;border:2px solid #7a7a7a"></div><div class="a" style="left:3.6px;top:3.6px;width:15px;height:15px;background:#5a8c59;border:1px solid #dcdcdc;border-radius:3.5px;font-size:10.5px;line-height:13px;text-align:center;color:#fff">O</div><div class="a" style="left:0;top:0;width:109.3px;height:61.7px;display:flex;align-items:center;justify-content:center"><div style="font-size:12.2px;letter-spacing:-0.3px;line-height:16px;text-align:left;color:#fafafa;white-space:nowrap;padding-top:3px">Comedor</div></div><div class="a" style="left:-6.4px;top:-6.4px;width:12.8px;height:12.8px;border-radius:50%;background:#cbcbcb;border:1.6px solid #1e1e1e"></div><div class="a" style="left:48.2px;top:-6.4px;width:12.8px;height:12.8px;border-radius:50%;background:#cbcbcb;border:1.6px solid #1e1e1e"></div><div class="a" style="left:75.6px;top:-6.4px;width:12.8px;height:12.8px;border-radius:50%;background:#cbcbcb;border:1.6px solid #1e1e1e"></div><div class="a" style="left:102.9px;top:-6.4px;width:12.8px;height:12.8px;border-radius:50%;background:#cbcbcb;border:1.6px solid #1e1e1e"></div><div class="a" style="left:-6.4px;top:24.5px;width:12.8px;height:12.8px;border-radius:50%;background:#cbcbcb;border:1.6px solid #1e1e1e"></div><div class="a" style="left:102.9px;top:24.5px;width:12.8px;height:12.8px;border-radius:50%;background:#cbcbcb;border:1.6px solid #1e1e1e"></div><div class="a" style="left:-6.4px;top:55.3px;width:12.8px;height:12.8px;border-radius:50%;background:#cbcbcb;border:1.6px solid #1e1e1e"></div><div class="a" style="left:48.2px;top:55.3px;width:12.8px;height:12.8px;border-radius:50%;background:#cbcbcb;border:1.6px solid #1e1e1e"></div><div class="a" style="left:75.6px;top:55.3px;width:12.8px;height:12.8px;border-radius:50%;background:#cbcbcb;border:1.6px solid #1e1e1e"></div><div class="a" style="left:102.9px;top:55.3px;width:12.8px;height:12.8px;border-radius:50%;background:#cbcbcb;border:1.6px solid #1e1e1e"></div></div>
<div class="a" style="left:708.5px;top:225.7px;width:109.3px;height:61.7px;opacity:0.25;"><div class="a" style="left:-1px;top:-1px;width:111.3px;height:63.7px;background:#476dab;border:2px solid #7a7a7a"></div><div class="a" style="left:3.6px;top:3.6px;width:15px;height:15px;background:#5a8c59;border:1px solid #dcdcdc;border-radius:3.5px;font-size:10.5px;line-height:13px;text-align:center;color:#fff">O</div><div class="a" style="left:0;top:0;width:109.3px;height:61.7px;display:flex;align-items:center;justify-content:center"><div style="font-size:12.2px;letter-spacing:-0.3px;line-height:16px;text-align:left;color:#fafafa;white-space:nowrap;padding-top:3px">Almacén de<br>Suministros</div></div><div class="a" style="left:-6.4px;top:-6.4px;width:12.8px;height:12.8px;border-radius:50%;background:#cbcbcb;border:1.6px solid #1e1e1e"></div><div class="a" style="left:48.2px;top:-6.4px;width:12.8px;height:12.8px;border-radius:50%;background:#cbcbcb;border:1.6px solid #1e1e1e"></div><div class="a" style="left:75.6px;top:-6.4px;width:12.8px;height:12.8px;border-radius:50%;background:#cbcbcb;border:1.6px solid #1e1e1e"></div><div class="a" style="left:102.9px;top:-6.4px;width:12.8px;height:12.8px;border-radius:50%;background:#cbcbcb;border:1.6px solid #1e1e1e"></div><div class="a" style="left:-6.4px;top:24.5px;width:12.8px;height:12.8px;border-radius:50%;background:#cbcbcb;border:1.6px solid #1e1e1e"></div><div class="a" style="left:102.9px;top:24.5px;width:12.8px;height:12.8px;border-radius:50%;background:#cbcbcb;border:1.6px solid #1e1e1e"></div><div class="a" style="left:-6.4px;top:55.3px;width:12.8px;height:12.8px;border-radius:50%;background:#cbcbcb;border:1.6px solid #1e1e1e"></div><div class="a" style="left:48.2px;top:55.3px;width:12.8px;height:12.8px;border-radius:50%;background:#cbcbcb;border:1.6px solid #1e1e1e"></div><div class="a" style="left:75.6px;top:55.3px;width:12.8px;height:12.8px;border-radius:50%;background:#cbcbcb;border:1.6px solid #1e1e1e"></div><div class="a" style="left:102.9px;top:55.3px;width:12.8px;height:12.8px;border-radius:50%;background:#cbcbcb;border:1.6px solid #1e1e1e"></div></div>
<div class="a" style="left:257.8px;top:325.4px;width:109.3px;height:61.7px;opacity:0.25;"><div class="a" style="left:-1px;top:-1px;width:111.3px;height:63.7px;background:#476dab;border:2px solid #7a7a7a"></div><div class="a" style="left:90.7px;top:3.6px;width:15px;height:15px;background:#8c5a5a;border:1px solid #dcdcdc;border-radius:3.5px;font-size:10.5px;line-height:13px;text-align:center;color:#fff">N</div><div class="a" style="left:0;top:0;width:109.3px;height:61.7px;display:flex;align-items:center;justify-content:center"><div style="font-size:12.2px;letter-spacing:-0.3px;line-height:16px;text-align:left;color:#fafafa;white-space:nowrap;padding-top:3px">Sala de<br>Máquinas</div></div><div class="a" style="left:-6.4px;top:-6.4px;width:12.8px;height:12.8px;border-radius:50%;background:#cbcbcb;border:1.6px solid #1e1e1e"></div><div class="a" style="left:48.2px;top:-6.4px;width:12.8px;height:12.8px;border-radius:50%;background:#cbcbcb;border:1.6px solid #1e1e1e"></div><div class="a" style="left:75.6px;top:-6.4px;width:12.8px;height:12.8px;border-radius:50%;background:#cbcbcb;border:1.6px solid #1e1e1e"></div><div class="a" style="left:102.9px;top:-6.4px;width:12.8px;height:12.8px;border-radius:50%;background:#cbcbcb;border:1.6px solid #1e1e1e"></div><div class="a" style="left:-6.4px;top:24.5px;width:12.8px;height:12.8px;border-radius:50%;background:#cbcbcb;border:1.6px solid #1e1e1e"></div><div class="a" style="left:102.9px;top:24.5px;width:12.8px;height:12.8px;border-radius:50%;background:#cbcbcb;border:1.6px solid #1e1e1e"></div><div class="a" style="left:-6.4px;top:55.3px;width:12.8px;height:12.8px;border-radius:50%;background:#cbcbcb;border:1.6px solid #1e1e1e"></div><div class="a" style="left:48.2px;top:55.3px;width:12.8px;height:12.8px;border-radius:50%;background:#cbcbcb;border:1.6px solid #1e1e1e"></div><div class="a" style="left:75.6px;top:55.3px;width:12.8px;height:12.8px;border-radius:50%;background:#cbcbcb;border:1.6px solid #1e1e1e"></div><div class="a" style="left:102.9px;top:55.3px;width:12.8px;height:12.8px;border-radius:50%;background:#cbcbcb;border:1.6px solid #1e1e1e"></div></div>
<div class="a" style="left:708.5px;top:325.4px;width:109.3px;height:61.7px;opacity:0.25;"><div class="a" style="left:-1px;top:-1px;width:111.3px;height:63.7px;background:#476dab;border:2px solid #7a7a7a"></div><div class="a" style="left:0;top:0;width:109.3px;height:61.7px;display:flex;align-items:center;justify-content:center"><div style="font-size:12.2px;letter-spacing:-0.3px;line-height:16px;text-align:left;color:#fafafa;white-space:nowrap;padding-top:3px">Esclusa de<br>Acoplamiento</div></div><div class="a" style="left:-6.4px;top:-6.4px;width:12.8px;height:12.8px;border-radius:50%;background:#cbcbcb;border:1.6px solid #1e1e1e"></div><div class="a" style="left:48.2px;top:-6.4px;width:12.8px;height:12.8px;border-radius:50%;background:#cbcbcb;border:1.6px solid #1e1e1e"></div><div class="a" style="left:75.6px;top:-6.4px;width:12.8px;height:12.8px;border-radius:50%;background:#cbcbcb;border:1.6px solid #1e1e1e"></div><div class="a" style="left:102.9px;top:-6.4px;width:12.8px;height:12.8px;border-radius:50%;background:#cbcbcb;border:1.6px solid #1e1e1e"></div><div class="a" style="left:-6.4px;top:24.5px;width:12.8px;height:12.8px;border-radius:50%;background:#cbcbcb;border:1.6px solid #1e1e1e"></div><div class="a" style="left:102.9px;top:24.5px;width:12.8px;height:12.8px;border-radius:50%;background:#cbcbcb;border:1.6px solid #1e1e1e"></div><div class="a" style="left:-6.4px;top:55.3px;width:12.8px;height:12.8px;border-radius:50%;background:#cbcbcb;border:1.6px solid #1e1e1e"></div><div class="a" style="left:48.2px;top:55.3px;width:12.8px;height:12.8px;border-radius:50%;background:#cbcbcb;border:1.6px solid #1e1e1e"></div><div class="a" style="left:75.6px;top:55.3px;width:12.8px;height:12.8px;border-radius:50%;background:#cbcbcb;border:1.6px solid #1e1e1e"></div><div class="a" style="left:102.9px;top:55.3px;width:12.8px;height:12.8px;border-radius:50%;background:#cbcbcb;border:1.6px solid #1e1e1e"></div></div>
<div class="a" style="left:257.8px;top:425.1px;width:109.3px;height:61.7px;opacity:0.25;"><div class="a" style="left:-1px;top:-1px;width:111.3px;height:63.7px;background:#476dab;border:2px solid #7a7a7a"></div><div class="a" style="left:0;top:0;width:109.3px;height:61.7px;display:flex;align-items:center;justify-content:center"><div style="font-size:12.2px;letter-spacing:-0.3px;line-height:16px;text-align:left;color:#fafafa;white-space:nowrap;padding-top:3px">Sala del Reactor</div></div><div class="a" style="left:-6.4px;top:-6.4px;width:12.8px;height:12.8px;border-radius:50%;background:#cbcbcb;border:1.6px solid #1e1e1e"></div><div class="a" style="left:48.2px;top:-6.4px;width:12.8px;height:12.8px;border-radius:50%;background:#cbcbcb;border:1.6px solid #1e1e1e"></div><div class="a" style="left:75.6px;top:-6.4px;width:12.8px;height:12.8px;border-radius:50%;background:#cbcbcb;border:1.6px solid #1e1e1e"></div><div class="a" style="left:102.9px;top:-6.4px;width:12.8px;height:12.8px;border-radius:50%;background:#cbcbcb;border:1.6px solid #1e1e1e"></div><div class="a" style="left:-6.4px;top:24.5px;width:12.8px;height:12.8px;border-radius:50%;background:#cbcbcb;border:1.6px solid #1e1e1e"></div><div class="a" style="left:102.9px;top:24.5px;width:12.8px;height:12.8px;border-radius:50%;background:#cbcbcb;border:1.6px solid #1e1e1e"></div><div class="a" style="left:-6.4px;top:55.3px;width:12.8px;height:12.8px;border-radius:50%;background:#cbcbcb;border:1.6px solid #1e1e1e"></div><div class="a" style="left:48.2px;top:55.3px;width:12.8px;height:12.8px;border-radius:50%;background:#cbcbcb;border:1.6px solid #1e1e1e"></div><div class="a" style="left:75.6px;top:55.3px;width:12.8px;height:12.8px;border-radius:50%;background:#cbcbcb;border:1.6px solid #1e1e1e"></div><div class="a" style="left:102.9px;top:55.3px;width:12.8px;height:12.8px;border-radius:50%;background:#cbcbcb;border:1.6px solid #1e1e1e"></div></div>
<div class="a" style="left:707.4px;top:524.1px;width:109.3px;height:61.7px;"><div class="a" style="left:-1px;top:-1px;width:111.3px;height:63.7px;background:#476dab;border:2px solid #7a7a7a"></div><div class="a" style="left:0;top:0;width:109.3px;height:61.7px;display:flex;align-items:center;justify-content:center"><div style="font-size:12.2px;letter-spacing:-0.3px;line-height:16px;text-align:left;color:#fafafa;white-space:nowrap;padding-top:3px">Entrada de la<br>Base Alien</div></div><div class="a" style="left:-6.4px;top:-6.4px;width:12.8px;height:12.8px;border-radius:50%;background:#cbcbcb;border:1.6px solid #1e1e1e"></div><div class="a" style="left:48.2px;top:-6.4px;width:12.8px;height:12.8px;border-radius:50%;background:#cbcbcb;border:1.6px solid #1e1e1e"></div><div class="a" style="left:75.6px;top:-6.4px;width:12.8px;height:12.8px;border-radius:50%;background:#cbcbcb;border:1.6px solid #1e1e1e"></div><div class="a" style="left:102.9px;top:-6.4px;width:12.8px;height:12.8px;border-radius:50%;background:#cbcbcb;border:1.6px solid #1e1e1e"></div><div class="a" style="left:-6.4px;top:24.5px;width:12.8px;height:12.8px;border-radius:50%;background:#cbcbcb;border:1.6px solid #1e1e1e"></div><div class="a" style="left:102.9px;top:24.5px;width:12.8px;height:12.8px;border-radius:50%;background:#cbcbcb;border:1.6px solid #1e1e1e"></div><div class="a" style="left:-6.4px;top:55.3px;width:12.8px;height:12.8px;border-radius:50%;background:#cbcbcb;border:1.6px solid #1e1e1e"></div><div class="a" style="left:48.2px;top:55.3px;width:12.8px;height:12.8px;border-radius:50%;background:#cbcbcb;border:1.6px solid #1e1e1e"></div><div class="a" style="left:75.6px;top:55.3px;width:12.8px;height:12.8px;border-radius:50%;background:#cbcbcb;border:1.6px solid #1e1e1e"></div><div class="a" style="left:102.9px;top:55.3px;width:12.8px;height:12.8px;border-radius:50%;background:#cbcbcb;border:1.6px solid #1e1e1e"></div></div>
<div class="a" style="left:557.2px;top:623.8px;width:109.3px;height:61.7px;"><div class="a" style="left:-1px;top:-1px;width:111.3px;height:63.7px;background:#2e2e2e;border:2px solid #7e7e7e"></div><div class="a" style="left:0;top:0;width:109.3px;height:61.7px;display:flex;align-items:center;justify-content:center"><div style="font-size:12.2px;letter-spacing:-0.3px;line-height:16px;text-align:left;color:#fafafa;white-space:nowrap;padding-top:3px">Cámara de<br>Incubación</div></div><div class="a" style="left:-6.4px;top:-6.4px;width:12.8px;height:12.8px;border-radius:50%;background:#cbcbcb;border:1.6px solid #1e1e1e"></div><div class="a" style="left:48.2px;top:-6.4px;width:12.8px;height:12.8px;border-radius:50%;background:#cbcbcb;border:1.6px solid #1e1e1e"></div><div class="a" style="left:75.6px;top:-6.4px;width:12.8px;height:12.8px;border-radius:50%;background:#cbcbcb;border:1.6px solid #1e1e1e"></div><div class="a" style="left:102.9px;top:-6.4px;width:12.8px;height:12.8px;border-radius:50%;background:#cbcbcb;border:1.6px solid #1e1e1e"></div><div class="a" style="left:-6.4px;top:24.5px;width:12.8px;height:12.8px;border-radius:50%;background:#cbcbcb;border:1.6px solid #1e1e1e"></div><div class="a" style="left:102.9px;top:24.5px;width:12.8px;height:12.8px;border-radius:50%;background:#cbcbcb;border:1.6px solid #1e1e1e"></div><div class="a" style="left:-6.4px;top:55.3px;width:12.8px;height:12.8px;border-radius:50%;background:#cbcbcb;border:1.6px solid #1e1e1e"></div><div class="a" style="left:48.2px;top:55.3px;width:12.8px;height:12.8px;border-radius:50%;background:#cbcbcb;border:1.6px solid #1e1e1e"></div><div class="a" style="left:75.6px;top:55.3px;width:12.8px;height:12.8px;border-radius:50%;background:#cbcbcb;border:1.6px solid #1e1e1e"></div><div class="a" style="left:102.9px;top:55.3px;width:12.8px;height:12.8px;border-radius:50%;background:#cbcbcb;border:1.6px solid #1e1e1e"></div></div>
<div class="a" style="left:707.4px;top:623.8px;width:109.3px;height:61.7px;"><div class="a" style="left:-1px;top:-1px;width:111.3px;height:63.7px;background:#476dab;border:2px solid #7a7a7a"></div><div class="a" style="left:90.7px;top:3.6px;width:15px;height:15px;background:#8c5a5a;border:1px solid #dcdcdc;border-radius:3.5px;font-size:10.5px;line-height:13px;text-align:center;color:#fff">N</div><div class="a" style="left:0;top:0;width:109.3px;height:61.7px;display:flex;align-items:center;justify-content:center"><div style="font-size:12.2px;letter-spacing:-0.3px;line-height:16px;text-align:left;color:#fafafa;white-space:nowrap;padding-top:3px">Corredor<br>Biomecánico</div></div><div class="a" style="left:-6.4px;top:-6.4px;width:12.8px;height:12.8px;border-radius:50%;background:#cbcbcb;border:1.6px solid #1e1e1e"></div><div class="a" style="left:48.2px;top:-6.4px;width:12.8px;height:12.8px;border-radius:50%;background:#cbcbcb;border:1.6px solid #1e1e1e"></div><div class="a" style="left:75.6px;top:-6.4px;width:12.8px;height:12.8px;border-radius:50%;background:#cbcbcb;border:1.6px solid #1e1e1e"></div><div class="a" style="left:102.9px;top:-6.4px;width:12.8px;height:12.8px;border-radius:50%;background:#cbcbcb;border:1.6px solid #1e1e1e"></div><div class="a" style="left:-6.4px;top:24.5px;width:12.8px;height:12.8px;border-radius:50%;background:#cbcbcb;border:1.6px solid #1e1e1e"></div><div class="a" style="left:102.9px;top:24.5px;width:12.8px;height:12.8px;border-radius:50%;background:#cbcbcb;border:1.6px solid #1e1e1e"></div><div class="a" style="left:-6.4px;top:55.3px;width:12.8px;height:12.8px;border-radius:50%;background:#cbcbcb;border:1.6px solid #1e1e1e"></div><div class="a" style="left:48.2px;top:55.3px;width:12.8px;height:12.8px;border-radius:50%;background:#cbcbcb;border:1.6px solid #1e1e1e"></div><div class="a" style="left:75.6px;top:55.3px;width:12.8px;height:12.8px;border-radius:50%;background:#cbcbcb;border:1.6px solid #1e1e1e"></div><div class="a" style="left:102.9px;top:55.3px;width:12.8px;height:12.8px;border-radius:50%;background:#cbcbcb;border:1.6px solid #1e1e1e"></div></div>
<div class="a" style="left:857.6px;top:623.8px;width:109.3px;height:61.7px;"><div class="a" style="left:-1px;top:-1px;width:111.3px;height:63.7px;background:#476dab;border:2px solid #7a7a7a"></div><div class="a" style="left:3.6px;top:3.6px;width:15px;height:15px;background:#5a8c59;border:1px solid #dcdcdc;border-radius:3.5px;font-size:10.5px;line-height:13px;text-align:center;color:#fff">O</div><div class="a" style="left:0;top:0;width:109.3px;height:61.7px;display:flex;align-items:center;justify-content:center"><div style="font-size:12.2px;letter-spacing:-0.3px;line-height:16px;text-align:left;color:#fafafa;white-space:nowrap;padding-top:3px">Laboratorio de<br>Experimentación</div></div><div class="a" style="left:-6.4px;top:-6.4px;width:12.8px;height:12.8px;border-radius:50%;background:#cbcbcb;border:1.6px solid #1e1e1e"></div><div class="a" style="left:48.2px;top:-6.4px;width:12.8px;height:12.8px;border-radius:50%;background:#cbcbcb;border:1.6px solid #1e1e1e"></div><div class="a" style="left:75.6px;top:-6.4px;width:12.8px;height:12.8px;border-radius:50%;background:#cbcbcb;border:1.6px solid #1e1e1e"></div><div class="a" style="left:102.9px;top:-6.4px;width:12.8px;height:12.8px;border-radius:50%;background:#cbcbcb;border:1.6px solid #1e1e1e"></div><div class="a" style="left:-6.4px;top:24.5px;width:12.8px;height:12.8px;border-radius:50%;background:#cbcbcb;border:1.6px solid #1e1e1e"></div><div class="a" style="left:102.9px;top:24.5px;width:12.8px;height:12.8px;border-radius:50%;background:#cbcbcb;border:1.6px solid #1e1e1e"></div><div class="a" style="left:-6.4px;top:55.3px;width:12.8px;height:12.8px;border-radius:50%;background:#cbcbcb;border:1.6px solid #1e1e1e"></div><div class="a" style="left:48.2px;top:55.3px;width:12.8px;height:12.8px;border-radius:50%;background:#cbcbcb;border:1.6px solid #1e1e1e"></div><div class="a" style="left:75.6px;top:55.3px;width:12.8px;height:12.8px;border-radius:50%;background:#cbcbcb;border:1.6px solid #1e1e1e"></div><div class="a" style="left:102.9px;top:55.3px;width:12.8px;height:12.8px;border-radius:50%;background:#cbcbcb;border:1.6px solid #1e1e1e"></div></div>
<div class="a" style="left:407.0px;top:723.4px;width:109.3px;height:61.7px;"><div class="a" style="left:-1px;top:-1px;width:111.3px;height:63.7px;background:#476dab;border:2px solid #7a7a7a"></div><div class="a" style="left:3.6px;top:3.6px;width:15px;height:15px;background:#5a8c59;border:1px solid #dcdcdc;border-radius:3.5px;font-size:10.5px;line-height:13px;text-align:center;color:#fff">O</div><div class="a" style="left:0;top:0;width:109.3px;height:61.7px;display:flex;align-items:center;justify-content:center"><div style="font-size:12.2px;letter-spacing:-0.3px;line-height:16px;text-align:left;color:#fafafa;white-space:nowrap;padding-top:3px">Centro de<br>Comunicaciones</div></div><div class="a" style="left:-6.4px;top:-6.4px;width:12.8px;height:12.8px;border-radius:50%;background:#cbcbcb;border:1.6px solid #1e1e1e"></div><div class="a" style="left:48.2px;top:-6.4px;width:12.8px;height:12.8px;border-radius:50%;background:#cbcbcb;border:1.6px solid #1e1e1e"></div><div class="a" style="left:75.6px;top:-6.4px;width:12.8px;height:12.8px;border-radius:50%;background:#cbcbcb;border:1.6px solid #1e1e1e"></div><div class="a" style="left:102.9px;top:-6.4px;width:12.8px;height:12.8px;border-radius:50%;background:#cbcbcb;border:1.6px solid #1e1e1e"></div><div class="a" style="left:-6.4px;top:24.5px;width:12.8px;height:12.8px;border-radius:50%;background:#cbcbcb;border:1.6px solid #1e1e1e"></div><div class="a" style="left:102.9px;top:24.5px;width:12.8px;height:12.8px;border-radius:50%;background:#cbcbcb;border:1.6px solid #1e1e1e"></div><div class="a" style="left:-6.4px;top:55.3px;width:12.8px;height:12.8px;border-radius:50%;background:#cbcbcb;border:1.6px solid #1e1e1e"></div><div class="a" style="left:48.2px;top:55.3px;width:12.8px;height:12.8px;border-radius:50%;background:#cbcbcb;border:1.6px solid #1e1e1e"></div><div class="a" style="left:75.6px;top:55.3px;width:12.8px;height:12.8px;border-radius:50%;background:#cbcbcb;border:1.6px solid #1e1e1e"></div><div class="a" style="left:102.9px;top:55.3px;width:12.8px;height:12.8px;border-radius:50%;background:#cbcbcb;border:1.6px solid #1e1e1e"></div></div>
<div class="a" style="left:557.2px;top:723.4px;width:109.3px;height:61.7px;"><div class="a" style="left:-1px;top:-1px;width:111.3px;height:63.7px;background:#476dab;border:2px solid #7a7a7a"></div><div class="a" style="left:0;top:0;width:109.3px;height:61.7px;display:flex;align-items:center;justify-content:center"><div style="font-size:12.2px;letter-spacing:-0.3px;line-height:16px;text-align:left;color:#fafafa;white-space:nowrap;padding-top:3px">Pasillo Oeste</div></div><div class="a" style="left:-6.4px;top:-6.4px;width:12.8px;height:12.8px;border-radius:50%;background:#cbcbcb;border:1.6px solid #1e1e1e"></div><div class="a" style="left:48.2px;top:-6.4px;width:12.8px;height:12.8px;border-radius:50%;background:#cbcbcb;border:1.6px solid #1e1e1e"></div><div class="a" style="left:75.6px;top:-6.4px;width:12.8px;height:12.8px;border-radius:50%;background:#cbcbcb;border:1.6px solid #1e1e1e"></div><div class="a" style="left:102.9px;top:-6.4px;width:12.8px;height:12.8px;border-radius:50%;background:#cbcbcb;border:1.6px solid #1e1e1e"></div><div class="a" style="left:-6.4px;top:24.5px;width:12.8px;height:12.8px;border-radius:50%;background:#cbcbcb;border:1.6px solid #1e1e1e"></div><div class="a" style="left:102.9px;top:24.5px;width:12.8px;height:12.8px;border-radius:50%;background:#cbcbcb;border:1.6px solid #1e1e1e"></div><div class="a" style="left:-6.4px;top:55.3px;width:12.8px;height:12.8px;border-radius:50%;background:#cbcbcb;border:1.6px solid #1e1e1e"></div><div class="a" style="left:48.2px;top:55.3px;width:12.8px;height:12.8px;border-radius:50%;background:#cbcbcb;border:1.6px solid #1e1e1e"></div><div class="a" style="left:75.6px;top:55.3px;width:12.8px;height:12.8px;border-radius:50%;background:#cbcbcb;border:1.6px solid #1e1e1e"></div><div class="a" style="left:102.9px;top:55.3px;width:12.8px;height:12.8px;border-radius:50%;background:#cbcbcb;border:1.6px solid #1e1e1e"></div></div>
<div class="a" style="left:707.4px;top:723.4px;width:109.3px;height:61.7px;"><div class="a" style="left:-1px;top:-1px;width:111.3px;height:63.7px;background:#476dab;border:2px solid #7a7a7a"></div><div class="a" style="left:0;top:0;width:109.3px;height:61.7px;display:flex;align-items:center;justify-content:center"><div style="font-size:12.2px;letter-spacing:-0.3px;line-height:16px;text-align:left;color:#fafafa;white-space:nowrap;padding-top:3px">Cámara Central</div></div><div class="a" style="left:-6.4px;top:-6.4px;width:12.8px;height:12.8px;border-radius:50%;background:#cbcbcb;border:1.6px solid #1e1e1e"></div><div class="a" style="left:48.2px;top:-6.4px;width:12.8px;height:12.8px;border-radius:50%;background:#cbcbcb;border:1.6px solid #1e1e1e"></div><div class="a" style="left:75.6px;top:-6.4px;width:12.8px;height:12.8px;border-radius:50%;background:#cbcbcb;border:1.6px solid #1e1e1e"></div><div class="a" style="left:102.9px;top:-6.4px;width:12.8px;height:12.8px;border-radius:50%;background:#cbcbcb;border:1.6px solid #1e1e1e"></div><div class="a" style="left:-6.4px;top:24.5px;width:12.8px;height:12.8px;border-radius:50%;background:#cbcbcb;border:1.6px solid #1e1e1e"></div><div class="a" style="left:102.9px;top:24.5px;width:12.8px;height:12.8px;border-radius:50%;background:#cbcbcb;border:1.6px solid #1e1e1e"></div><div class="a" style="left:-6.4px;top:55.3px;width:12.8px;height:12.8px;border-radius:50%;background:#cbcbcb;border:1.6px solid #1e1e1e"></div><div class="a" style="left:48.2px;top:55.3px;width:12.8px;height:12.8px;border-radius:50%;background:#cbcbcb;border:1.6px solid #1e1e1e"></div><div class="a" style="left:75.6px;top:55.3px;width:12.8px;height:12.8px;border-radius:50%;background:#cbcbcb;border:1.6px solid #1e1e1e"></div><div class="a" style="left:102.9px;top:55.3px;width:12.8px;height:12.8px;border-radius:50%;background:#cbcbcb;border:1.6px solid #1e1e1e"></div></div>
<div class="a" style="left:857.6px;top:723.4px;width:109.3px;height:61.7px;"><div class="a" style="left:-1px;top:-1px;width:111.3px;height:63.7px;background:#476dab;border:2px solid #7a7a7a"></div><div class="a" style="left:3.6px;top:3.6px;width:15px;height:15px;background:#5a8c59;border:1px solid #dcdcdc;border-radius:3.5px;font-size:10.5px;line-height:13px;text-align:center;color:#fff">O</div><div class="a" style="left:0;top:0;width:109.3px;height:61.7px;display:flex;align-items:center;justify-content:center"><div style="font-size:12.2px;letter-spacing:-0.3px;line-height:16px;text-align:left;color:#fafafa;white-space:nowrap;padding-top:3px">Archivo de<br>Muestras</div></div><div class="a" style="left:-6.4px;top:-6.4px;width:12.8px;height:12.8px;border-radius:50%;background:#cbcbcb;border:1.6px solid #1e1e1e"></div><div class="a" style="left:48.2px;top:-6.4px;width:12.8px;height:12.8px;border-radius:50%;background:#cbcbcb;border:1.6px solid #1e1e1e"></div><div class="a" style="left:75.6px;top:-6.4px;width:12.8px;height:12.8px;border-radius:50%;background:#cbcbcb;border:1.6px solid #1e1e1e"></div><div class="a" style="left:102.9px;top:-6.4px;width:12.8px;height:12.8px;border-radius:50%;background:#cbcbcb;border:1.6px solid #1e1e1e"></div><div class="a" style="left:-6.4px;top:24.5px;width:12.8px;height:12.8px;border-radius:50%;background:#cbcbcb;border:1.6px solid #1e1e1e"></div><div class="a" style="left:102.9px;top:24.5px;width:12.8px;height:12.8px;border-radius:50%;background:#cbcbcb;border:1.6px solid #1e1e1e"></div><div class="a" style="left:-6.4px;top:55.3px;width:12.8px;height:12.8px;border-radius:50%;background:#cbcbcb;border:1.6px solid #1e1e1e"></div><div class="a" style="left:48.2px;top:55.3px;width:12.8px;height:12.8px;border-radius:50%;background:#cbcbcb;border:1.6px solid #1e1e1e"></div><div class="a" style="left:75.6px;top:55.3px;width:12.8px;height:12.8px;border-radius:50%;background:#cbcbcb;border:1.6px solid #1e1e1e"></div><div class="a" style="left:102.9px;top:55.3px;width:12.8px;height:12.8px;border-radius:50%;background:#cbcbcb;border:1.6px solid #1e1e1e"></div></div>
<div class="a" style="left:1007.8px;top:723.4px;width:109.3px;height:61.7px;"><div class="a" style="left:-1px;top:-1px;width:111.3px;height:63.7px;background:#476dab;border:2px solid #7a7a7a"></div><div class="a" style="left:0;top:0;width:109.3px;height:61.7px;display:flex;align-items:center;justify-content:center"><div style="font-size:12.2px;letter-spacing:-0.3px;line-height:16px;text-align:left;color:#fafafa;white-space:nowrap;padding-top:3px">Pasillo Este</div></div><div class="a" style="left:-6.4px;top:-6.4px;width:12.8px;height:12.8px;border-radius:50%;background:#cbcbcb;border:1.6px solid #1e1e1e"></div><div class="a" style="left:48.2px;top:-6.4px;width:12.8px;height:12.8px;border-radius:50%;background:#cbcbcb;border:1.6px solid #1e1e1e"></div><div class="a" style="left:75.6px;top:-6.4px;width:12.8px;height:12.8px;border-radius:50%;background:#cbcbcb;border:1.6px solid #1e1e1e"></div><div class="a" style="left:102.9px;top:-6.4px;width:12.8px;height:12.8px;border-radius:50%;background:#cbcbcb;border:1.6px solid #1e1e1e"></div><div class="a" style="left:-6.4px;top:24.5px;width:12.8px;height:12.8px;border-radius:50%;background:#cbcbcb;border:1.6px solid #1e1e1e"></div><div class="a" style="left:102.9px;top:24.5px;width:12.8px;height:12.8px;border-radius:50%;background:#cbcbcb;border:1.6px solid #1e1e1e"></div><div class="a" style="left:-6.4px;top:55.3px;width:12.8px;height:12.8px;border-radius:50%;background:#cbcbcb;border:1.6px solid #1e1e1e"></div><div class="a" style="left:48.2px;top:55.3px;width:12.8px;height:12.8px;border-radius:50%;background:#cbcbcb;border:1.6px solid #1e1e1e"></div><div class="a" style="left:75.6px;top:55.3px;width:12.8px;height:12.8px;border-radius:50%;background:#cbcbcb;border:1.6px solid #1e1e1e"></div><div class="a" style="left:102.9px;top:55.3px;width:12.8px;height:12.8px;border-radius:50%;background:#cbcbcb;border:1.6px solid #1e1e1e"></div></div>
<div class="a" style="left:632.3px;top:823.1px;width:109.3px;height:61.7px;"><div class="a" style="left:-1px;top:-1px;width:111.3px;height:63.7px;background:#476dab;border:2px solid #7a7a7a"></div><div class="a" style="left:90.7px;top:3.6px;width:15px;height:15px;background:#8c5a5a;border:1px solid #dcdcdc;border-radius:3.5px;font-size:10.5px;line-height:13px;text-align:center;color:#fff">N</div><div class="a" style="left:0;top:0;width:109.3px;height:61.7px;display:flex;align-items:center;justify-content:center"><div style="font-size:12.2px;letter-spacing:-0.3px;line-height:16px;text-align:left;color:#fafafa;white-space:nowrap;padding-top:3px">Las<br>Profundidades</div></div><div class="a" style="left:-6.4px;top:-6.4px;width:12.8px;height:12.8px;border-radius:50%;background:#cbcbcb;border:1.6px solid #1e1e1e"></div><div class="a" style="left:48.2px;top:-6.4px;width:12.8px;height:12.8px;border-radius:50%;background:#cbcbcb;border:1.6px solid #1e1e1e"></div><div class="a" style="left:75.6px;top:-6.4px;width:12.8px;height:12.8px;border-radius:50%;background:#cbcbcb;border:1.6px solid #1e1e1e"></div><div class="a" style="left:102.9px;top:-6.4px;width:12.8px;height:12.8px;border-radius:50%;background:#cbcbcb;border:1.6px solid #1e1e1e"></div><div class="a" style="left:-6.4px;top:24.5px;width:12.8px;height:12.8px;border-radius:50%;background:#cbcbcb;border:1.6px solid #1e1e1e"></div><div class="a" style="left:102.9px;top:24.5px;width:12.8px;height:12.8px;border-radius:50%;background:#cbcbcb;border:1.6px solid #1e1e1e"></div><div class="a" style="left:-6.4px;top:55.3px;width:12.8px;height:12.8px;border-radius:50%;background:#cbcbcb;border:1.6px solid #1e1e1e"></div><div class="a" style="left:48.2px;top:55.3px;width:12.8px;height:12.8px;border-radius:50%;background:#cbcbcb;border:1.6px solid #1e1e1e"></div><div class="a" style="left:75.6px;top:55.3px;width:12.8px;height:12.8px;border-radius:50%;background:#cbcbcb;border:1.6px solid #1e1e1e"></div><div class="a" style="left:102.9px;top:55.3px;width:12.8px;height:12.8px;border-radius:50%;background:#cbcbcb;border:1.6px solid #1e1e1e"></div></div>
<div class="a" style="left:1007.8px;top:823.1px;width:109.3px;height:61.7px;"><div class="a" style="left:-1px;top:-1px;width:111.3px;height:63.7px;background:#2e2e2e;border:2px solid #7e7e7e"></div><div class="a" style="left:3.6px;top:3.6px;width:15px;height:15px;background:#5a8c59;border:1px solid #dcdcdc;border-radius:3.5px;font-size:10.5px;line-height:13px;text-align:center;color:#fff">O</div><div class="a" style="left:0;top:0;width:109.3px;height:61.7px;display:flex;align-items:center;justify-content:center"><div style="font-size:12.2px;letter-spacing:-0.3px;line-height:16px;text-align:left;color:#fafafa;white-space:nowrap;padding-top:3px">Nido de<br>Criaturas</div></div><div class="a" style="left:-6.4px;top:-6.4px;width:12.8px;height:12.8px;border-radius:50%;background:#cbcbcb;border:1.6px solid #1e1e1e"></div><div class="a" style="left:48.2px;top:-6.4px;width:12.8px;height:12.8px;border-radius:50%;background:#cbcbcb;border:1.6px solid #1e1e1e"></div><div class="a" style="left:75.6px;top:-6.4px;width:12.8px;height:12.8px;border-radius:50%;background:#cbcbcb;border:1.6px solid #1e1e1e"></div><div class="a" style="left:102.9px;top:-6.4px;width:12.8px;height:12.8px;border-radius:50%;background:#cbcbcb;border:1.6px solid #1e1e1e"></div><div class="a" style="left:-6.4px;top:24.5px;width:12.8px;height:12.8px;border-radius:50%;background:#cbcbcb;border:1.6px solid #1e1e1e"></div><div class="a" style="left:102.9px;top:24.5px;width:12.8px;height:12.8px;border-radius:50%;background:#cbcbcb;border:1.6px solid #1e1e1e"></div><div class="a" style="left:-6.4px;top:55.3px;width:12.8px;height:12.8px;border-radius:50%;background:#cbcbcb;border:1.6px solid #1e1e1e"></div><div class="a" style="left:48.2px;top:55.3px;width:12.8px;height:12.8px;border-radius:50%;background:#cbcbcb;border:1.6px solid #1e1e1e"></div><div class="a" style="left:75.6px;top:55.3px;width:12.8px;height:12.8px;border-radius:50%;background:#cbcbcb;border:1.6px solid #1e1e1e"></div><div class="a" style="left:102.9px;top:55.3px;width:12.8px;height:12.8px;border-radius:50%;background:#cbcbcb;border:1.6px solid #1e1e1e"></div></div>
<div class="a" style="left:707.4px;top:922.7px;width:109.3px;height:61.7px;"><div class="a" style="left:-1px;top:-1px;width:111.3px;height:63.7px;background:#476dab;border:2px solid #7a7a7a"></div><div class="a" style="left:3.6px;top:3.6px;width:15px;height:15px;background:#5a8c59;border:1px solid #dcdcdc;border-radius:3.5px;font-size:10.5px;line-height:13px;text-align:center;color:#fff">O</div><div class="a" style="left:0;top:0;width:109.3px;height:61.7px;display:flex;align-items:center;justify-content:center"><div style="font-size:12.2px;letter-spacing:-0.3px;line-height:16px;text-align:left;color:#fafafa;white-space:nowrap;padding-top:3px">Arsenal<br>Xenomorfo</div></div><div class="a" style="left:-6.4px;top:-6.4px;width:12.8px;height:12.8px;border-radius:50%;background:#cbcbcb;border:1.6px solid #1e1e1e"></div><div class="a" style="left:48.2px;top:-6.4px;width:12.8px;height:12.8px;border-radius:50%;background:#cbcbcb;border:1.6px solid #1e1e1e"></div><div class="a" style="left:75.6px;top:-6.4px;width:12.8px;height:12.8px;border-radius:50%;background:#cbcbcb;border:1.6px solid #1e1e1e"></div><div class="a" style="left:102.9px;top:-6.4px;width:12.8px;height:12.8px;border-radius:50%;background:#cbcbcb;border:1.6px solid #1e1e1e"></div><div class="a" style="left:-6.4px;top:24.5px;width:12.8px;height:12.8px;border-radius:50%;background:#cbcbcb;border:1.6px solid #1e1e1e"></div><div class="a" style="left:102.9px;top:24.5px;width:12.8px;height:12.8px;border-radius:50%;background:#cbcbcb;border:1.6px solid #1e1e1e"></div><div class="a" style="left:-6.4px;top:55.3px;width:12.8px;height:12.8px;border-radius:50%;background:#cbcbcb;border:1.6px solid #1e1e1e"></div><div class="a" style="left:48.2px;top:55.3px;width:12.8px;height:12.8px;border-radius:50%;background:#cbcbcb;border:1.6px solid #1e1e1e"></div><div class="a" style="left:75.6px;top:55.3px;width:12.8px;height:12.8px;border-radius:50%;background:#cbcbcb;border:1.6px solid #1e1e1e"></div><div class="a" style="left:102.9px;top:55.3px;width:12.8px;height:12.8px;border-radius:50%;background:#cbcbcb;border:1.6px solid #1e1e1e"></div></div>
<div class="a" style="left:782.5px;top:1022.3px;width:109.3px;height:61.7px;"><div class="a" style="left:-1px;top:-1px;width:111.3px;height:63.7px;background:#476dab;border:2px solid #7a7a7a"></div><div class="a" style="left:3.6px;top:3.6px;width:15px;height:15px;background:#5a8c59;border:1px solid #dcdcdc;border-radius:3.5px;font-size:10.5px;line-height:13px;text-align:center;color:#fff">O</div><div class="a" style="left:0;top:0;width:109.3px;height:61.7px;display:flex;align-items:center;justify-content:center"><div style="font-size:12.2px;letter-spacing:-0.3px;line-height:16px;text-align:left;color:#fafafa;white-space:nowrap;padding-top:3px">Cripta de los<br>Antiguos</div></div><div class="a" style="left:-6.4px;top:-6.4px;width:12.8px;height:12.8px;border-radius:50%;background:#cbcbcb;border:1.6px solid #1e1e1e"></div><div class="a" style="left:48.2px;top:-6.4px;width:12.8px;height:12.8px;border-radius:50%;background:#cbcbcb;border:1.6px solid #1e1e1e"></div><div class="a" style="left:75.6px;top:-6.4px;width:12.8px;height:12.8px;border-radius:50%;background:#cbcbcb;border:1.6px solid #1e1e1e"></div><div class="a" style="left:102.9px;top:-6.4px;width:12.8px;height:12.8px;border-radius:50%;background:#cbcbcb;border:1.6px solid #1e1e1e"></div><div class="a" style="left:-6.4px;top:24.5px;width:12.8px;height:12.8px;border-radius:50%;background:#cbcbcb;border:1.6px solid #1e1e1e"></div><div class="a" style="left:102.9px;top:24.5px;width:12.8px;height:12.8px;border-radius:50%;background:#cbcbcb;border:1.6px solid #1e1e1e"></div><div class="a" style="left:-6.4px;top:55.3px;width:12.8px;height:12.8px;border-radius:50%;background:#cbcbcb;border:1.6px solid #1e1e1e"></div><div class="a" style="left:48.2px;top:55.3px;width:12.8px;height:12.8px;border-radius:50%;background:#cbcbcb;border:1.6px solid #1e1e1e"></div><div class="a" style="left:75.6px;top:55.3px;width:12.8px;height:12.8px;border-radius:50%;background:#cbcbcb;border:1.6px solid #1e1e1e"></div><div class="a" style="left:102.9px;top:55.3px;width:12.8px;height:12.8px;border-radius:50%;background:#cbcbcb;border:1.6px solid #1e1e1e"></div></div>
<div class="a" style="left:782.5px;top:1122.0px;width:109.3px;height:61.7px;"><div class="a" style="left:-1px;top:-1px;width:111.3px;height:63.7px;background:#476dab;border:2px solid #7a7a7a"></div><div class="a" style="left:3.6px;top:3.6px;width:15px;height:15px;background:#5a8c59;border:1px solid #dcdcdc;border-radius:3.5px;font-size:10.5px;line-height:13px;text-align:center;color:#fff">O</div><div class="a" style="left:90.7px;top:3.6px;width:15px;height:15px;background:#8c5a5a;border:1px solid #dcdcdc;border-radius:3.5px;font-size:10.5px;line-height:13px;text-align:center;color:#fff">N</div><div class="a" style="left:0;top:0;width:109.3px;height:61.7px;display:flex;align-items:center;justify-content:center"><div style="font-size:12.2px;letter-spacing:-0.3px;line-height:16px;text-align:left;color:#fafafa;white-space:nowrap;padding-top:3px">x</div></div><div class="a" style="left:-6.4px;top:-6.4px;width:12.8px;height:12.8px;border-radius:50%;background:#cbcbcb;border:1.6px solid #1e1e1e"></div><div class="a" style="left:48.2px;top:-6.4px;width:12.8px;height:12.8px;border-radius:50%;background:#cbcbcb;border:1.6px solid #1e1e1e"></div><div class="a" style="left:75.6px;top:-6.4px;width:12.8px;height:12.8px;border-radius:50%;background:#cbcbcb;border:1.6px solid #1e1e1e"></div><div class="a" style="left:102.9px;top:-6.4px;width:12.8px;height:12.8px;border-radius:50%;background:#cbcbcb;border:1.6px solid #1e1e1e"></div><div class="a" style="left:-6.4px;top:24.5px;width:12.8px;height:12.8px;border-radius:50%;background:#cbcbcb;border:1.6px solid #1e1e1e"></div><div class="a" style="left:102.9px;top:24.5px;width:12.8px;height:12.8px;border-radius:50%;background:#cbcbcb;border:1.6px solid #1e1e1e"></div><div class="a" style="left:-6.4px;top:55.3px;width:12.8px;height:12.8px;border-radius:50%;background:#cbcbcb;border:1.6px solid #1e1e1e"></div><div class="a" style="left:48.2px;top:55.3px;width:12.8px;height:12.8px;border-radius:50%;background:#cbcbcb;border:1.6px solid #1e1e1e"></div><div class="a" style="left:75.6px;top:55.3px;width:12.8px;height:12.8px;border-radius:50%;background:#cbcbcb;border:1.6px solid #1e1e1e"></div><div class="a" style="left:102.9px;top:55.3px;width:12.8px;height:12.8px;border-radius:50%;background:#cbcbcb;border:1.6px solid #1e1e1e"></div></div>
</div>
<div class="a" style="left:1420px;top:133px;width:424px;height:1127px;background:#333333"></div>
<div class="a" style="left:1424px;top:137px;width:24px;height:24px;background:#3c3c3c;border:1px solid #4e4e4e"></div>
<div class="a" style="left:1450px;top:137px;width:24px;height:24px;background:#3c3c3c;border:1px solid #4e4e4e"></div>
<svg class="a" style="left:1424px;top:137px" width="50" height="24" viewBox="0 0 50 24"><path d="M5 8.5 L12 15.5 L19 8.5" fill="none" stroke="#f0f0f0" stroke-width="1.2"/><path d="M31 15.5 L38 8.5 L45 15.5" fill="none" stroke="#f0f0f0" stroke-width="1.2"/></svg>
<div class="a" style="left:1478px;top:137px;width:363px;height:24px;background:#3a3a3a;border:1px solid #555"></div>
<div class="a" style="left:1828px;top:165px;width:16px;height:1095px;background:#f0f0f0"></div>
<div class="a" style="left:1828px;top:182px;width:16px;height:961px;background:#cdcdcd"></div>
<svg class="a" style="left:1828px;top:165px" width="16" height="17" viewBox="0 0 16 17"><path d="M4 10.5 L8 6.5 L12 10.5" fill="none" stroke="#858585" stroke-width="1"/></svg>
<svg class="a" style="left:1828px;top:1243px" width="16" height="17" viewBox="0 0 16 17"><path d="M4 6.5 L8 10.5 L12 6.5" fill="none" stroke="#858585" stroke-width="1"/></svg>
<svg class="a" style="left:1429px;top:177.9px" width="19" height="19" viewBox="-9.5 -9.5 19 19"><circle r="8.4" fill="#fff"/><path d="M-4,2 L0,-2 L4,2" fill="none" stroke="#2a2a2a" stroke-width="1.8"/></svg>
<svg class="a" style="left:1452px;top:180.4px" width="15" height="14" viewBox="0 0 15 14"><path d="M1.5 9 L8 2.5 L13.5 2 L13 7.5 L6.5 14 Z" fill="#4da3ff"/><circle cx="10.5" cy="5" r="1.3" fill="#333"/><path d="M5 9 L9 5" stroke="#333" stroke-width="1"/></svg>
<div class="t" style="left:1470.5px;top:183.8px;font-size:10.4px;font-weight:bold;color:#4da3ff">IDENTIFICACIÓN</div>
<div class="t" style="left:1428.7px;top:225.1px;font-size:17.8px;font-weight:bold;color:#d8d8d8;letter-spacing:-0.1px">Id</div>
<div class="a" style="left:1428px;top:249px;width:392px;height:26px;background:#dddddd;border:1px solid #cfcfcf"></div>
<div class="t" style="left:1431px;top:255.0px;font-size:17.4px;color:#111">npc_marine</div>
<div class="t" style="left:1428.7px;top:290.2px;font-size:17.8px;font-weight:bold;color:#d8d8d8;letter-spacing:-0.1px">Nombre</div>
<div class="a" style="left:1428px;top:314px;width:392px;height:26px;background:#dddddd;border:1px solid #cfcfcf"></div>
<div class="t" style="left:1431px;top:320.0px;font-size:17.4px;color:#111">Cabo Rodriguez</div>
<div class="t" style="left:1428.7px;top:355.0px;font-size:17.8px;font-weight:bold;color:#d8d8d8;letter-spacing:-0.1px">Sala</div>
<div class="a" style="left:1428px;top:379px;width:392px;height:30px;background:linear-gradient(#f2f2f2,#e3e3e3);border:1px solid #acacac"></div>
<div class="t" style="left:1434px;top:387.1px;font-size:17.4px;color:#111">Armería</div>
<svg class="a" style="left:1806px;top:391px" width="8" height="6" viewBox="0 0 8 6"><path d="M1 1 L4 4 L7 1" fill="none" stroke="#333" stroke-width="1.2"/></svg>
<svg class="a" style="left:1430px;top:421px" width="21" height="22" viewBox="0 0 21 22">
<path d="M6.8 1.6 Q8.5 0.8 10.5 2.2 Q12.5 0.8 14.2 1.6 L12.6 5.2 H8.4 Z" fill="none" stroke="#d8d8d8" stroke-width="1.4" stroke-linejoin="round"/>
<path d="M8.4 5.6 Q2 8.6 2 14 Q2 20.4 10.5 20.4 Q19 20.4 19 14 Q19 8.6 12.6 5.6" fill="none" stroke="#d8d8d8" stroke-width="1.7"/>
<text x="10.5" y="16.6" text-anchor="middle" font-family="Liberation Sans" font-weight="bold" font-size="9.5" fill="#d8d8d8">$</text>
</svg>
<div class="t" style="left:1458px;top:424.0px;font-size:17.8px;font-weight:bold;color:#d8d8d8;letter-spacing:-0.1px">Dinero</div>
<div class="a" style="left:1428px;top:447px;width:392px;height:26px;background:#dddddd;border:1px solid #cfcfcf"></div>
<div class="t" style="left:1431px;top:453.0px;font-size:17.4px;color:#111">-1</div>
<svg class="a" style="left:1429px;top:491.1px" width="19" height="19" viewBox="-9.5 -9.5 19 19"><circle r="8.4" fill="#fff"/><path d="M-4,-2 L0,2 L4,-2" fill="none" stroke="#2a2a2a" stroke-width="1.8"/></svg>
<svg class="a" style="left:1452px;top:493.6px" width="15" height="14" viewBox="0 0 15 14"><path d="M2 1 H9 L12 4 V13 H2 Z" fill="none" stroke="#4da3ff" stroke-width="1.6"/><path d="M5 10 L10 5 L12 7 L7 12 H5 Z" fill="#4da3ff"/><path d="M4 4 H8" stroke="#4da3ff" stroke-width="1.4"/></svg>
<div class="t" style="left:1470.5px;top:497.0px;font-size:10.4px;font-weight:bold;color:#4da3ff">DESCRIPCIÓN</div>
<svg class="a" style="left:1429px;top:529.4px" width="19" height="19" viewBox="-9.5 -9.5 19 19"><circle r="8.4" fill="#fff"/><path d="M-4,-2 L0,2 L4,-2" fill="none" stroke="#2a2a2a" stroke-width="1.8"/></svg>
<svg class="a" style="left:1452px;top:531.9px" width="15" height="14" viewBox="0 0 15 14"><path d="M7.5 1 L13.5 4 V10.5 L7.5 13.5 L1.5 10.5 V4 Z" fill="none" stroke="#4da3ff" stroke-width="1.6"/><path d="M1.5 4 L7.5 7 L13.5 4 M7.5 7 V13.5 M4.5 2.5 L10.5 5.5 V8" fill="none" stroke="#4da3ff" stroke-width="1.3"/></svg>
<div class="t" style="left:1470.5px;top:535.3px;font-size:10.4px;font-weight:bold;color:#4da3ff">OBJETOS</div>
<svg class="a" style="left:1429px;top:567.5px" width="19" height="19" viewBox="-9.5 -9.5 19 19"><circle r="8.4" fill="#fff"/><path d="M-4,2 L0,-2 L4,2" fill="none" stroke="#2a2a2a" stroke-width="1.8"/></svg>
<svg class="a" style="left:1452px;top:570.0px" width="15" height="14" viewBox="0 0 15 14"><circle cx="7.5" cy="7" r="5" fill="none" stroke="#4da3ff" stroke-width="2.4" stroke-dasharray="2.2 1.1"/><circle cx="7.5" cy="7" r="2.2" fill="#4da3ff"/></svg>
<div class="t" style="left:1470.5px;top:573.4px;font-size:10.4px;font-weight:bold;color:#4da3ff">COMPORTAMIENTO</div>
<svg class="a" style="left:1429.4px;top:611.2px" width="13" height="13" viewBox="0 0 13 13"><rect width="13" height="13" fill="#ffffff"/><path d="M2.5 6.8 L5.2 9.5 L10.5 3" fill="none" stroke="#111" stroke-width="1.6"/></svg>
<div class="t" style="left:1452.3px;top:610.9px;font-size:17px;font-weight:bold;color:#e0e0e0;letter-spacing:-0.25px">Visible</div>
<svg class="a" style="left:1429.4px;top:641.2px" width="13" height="13" viewBox="0 0 13 13"><rect width="13" height="13" fill="#ffffff"/></svg>
<div class="t" style="left:1452.3px;top:640.9px;font-size:17px;font-weight:bold;color:#e0e0e0;letter-spacing:-0.25px">Es un cadáver</div>
<svg class="a" style="left:1429.4px;top:671.2px" width="13" height="13" viewBox="0 0 13 13"><rect width="13" height="13" fill="#ffffff"/></svg>
<div class="t" style="left:1452.3px;top:670.9px;font-size:17px;font-weight:bold;color:#e0e0e0;letter-spacing:-0.25px">Está patrullando</div>
<svg class="a" style="left:1429.4px;top:701.2px" width="13" height="13" viewBox="0 0 13 13"><rect width="13" height="13" fill="#ffffff"/></svg>
<div class="t" style="left:1452.3px;top:700.9px;font-size:17px;font-weight:bold;color:#e0e0e0;letter-spacing:-0.25px">Sigue al jugador</div>
<svg class="a" style="left:1429.4px;top:731.2px" width="13" height="13" viewBox="0 0 13 13"><rect width="13" height="13" fill="#ffffff"/><path d="M2.5 6.8 L5.2 9.5 L10.5 3" fill="none" stroke="#111" stroke-width="1.6"/></svg>
<div class="t" style="left:1452.3px;top:730.9px;font-size:17px;font-weight:bold;color:#e0e0e0;letter-spacing:-0.25px">Es comerciante</div>
<div class="a" style="left:1436px;top:749px;width:2px;height:497px;background:#545454"></div>
<div class="t" style="left:1448px;top:765.9px;font-size:17px;font-weight:bold;color:#d8d8d8;letter-spacing:-0.1px">Inventario de tienda</div>
<div class="t" style="left:1448px;top:789.4px;font-size:11.6px;color:#a6a6a6">rifle de pulsos x2, cuchillo de combate x3, armadura reforzada x1,</div>
<div class="t" style="left:1448px;top:805.1px;font-size:11.6px;color:#a6a6a6">granada EMP x2</div>
<div class="a" style="left:1448px;top:822px;width:372px;height:294px;background:#282828;border:1px solid #3e3e3e;border-radius:3px"></div>
<svg class="a" style="left:1454px;top:831px" width="19" height="19" viewBox="-9.5 -9.5 19 19"><circle r="8.4" fill="#fff"/><path d="M-4,2 L0,-2 L4,2" fill="none" stroke="#2a2a2a" stroke-width="1.8"/></svg>
<div class="t" style="left:1477px;top:832.9px;font-size:17.4px;color:#f0f0f0">Objetos en tienda (4)</div>
<div class="a" style="left:1798px;top:861px;width:17px;height:250px;background:#f0f0f0"></div>
<div class="a" style="left:1798px;top:878px;width:17px;height:53px;background:#cdcdcd"></div>
<svg class="a" style="left:1798px;top:861px" width="17" height="17" viewBox="0 0 17 17"><path d="M4.5 10.5 L8.5 6.5 L12.5 10.5" fill="none" stroke="#9a9a9a" stroke-width="1"/></svg>
<svg class="a" style="left:1798px;top:1094px" width="17" height="17" viewBox="0 0 17 17"><path d="M4.5 6.5 L8.5 10.5 L12.5 6.5" fill="none" stroke="#9a9a9a" stroke-width="1"/></svg>
<div class="a" style="left:1450px;top:861px;width:346px;height:250px;overflow:hidden">
<svg class="a" style="left:12px;top:12.5px" width="13" height="13" viewBox="0 0 13 13"><rect width="13" height="13" fill="#fff"/></svg>
<div class="a" style="left:33px;top:9.0px;width:150px;height:22px;overflow:hidden"><div class="t" style="left:0;top:2.2px;font-size:17.4px;color:#f0f0f0">ampolla de mutágeno</div></div>
<svg class="a" style="left:12px;top:41.5px" width="13" height="13" viewBox="0 0 13 13"><rect width="13" height="13" fill="#fff"/><path d="M2.5 6.8 L5.2 9.5 L10.5 3" fill="none" stroke="#111" stroke-width="1.6"/></svg>
<div class="a" style="left:33px;top:38.0px;width:150px;height:22px;overflow:hidden"><div class="t" style="left:0;top:2.2px;font-size:17.4px;color:#f0f0f0">armadura reforzada</div></div>
<svg class="a" style="left:12px;top:69.6px" width="13" height="13" viewBox="0 0 13 13"><rect width="13" height="13" fill="#fff"/></svg>
<div class="a" style="left:33px;top:66.1px;width:150px;height:22px;overflow:hidden"><div class="t" style="left:0;top:2.2px;font-size:17.4px;color:#f0f0f0">biomarcador alien</div></div>
<svg class="a" style="left:12px;top:97.7px" width="13" height="13" viewBox="0 0 13 13"><rect width="13" height="13" fill="#fff"/></svg>
<div class="a" style="left:33px;top:94.2px;width:150px;height:22px;overflow:hidden"><div class="t" style="left:0;top:2.2px;font-size:17.4px;color:#f0f0f0">botella de agua (5)</div></div>
<svg class="a" style="left:12px;top:125.8px" width="13" height="13" viewBox="0 0 13 13"><rect width="13" height="13" fill="#fff"/></svg>
<div class="a" style="left:33px;top:122.3px;width:150px;height:22px;overflow:hidden"><div class="t" style="left:0;top:2.2px;font-size:17.4px;color:#f0f0f0">botiquín de emergencia</div></div>
<svg class="a" style="left:12px;top:153.9px" width="13" height="13" viewBox="0 0 13 13"><rect width="13" height="13" fill="#fff"/></svg>
<div class="a" style="left:33px;top:150.4px;width:150px;height:22px;overflow:hidden"><div class="t" style="left:0;top:2.2px;font-size:17.4px;color:#f0f0f0">caja de suministros</div></div>
<svg class="a" style="left:12px;top:182.0px" width="13" height="13" viewBox="0 0 13 13"><rect width="13" height="13" fill="#fff"/></svg>
<div class="a" style="left:33px;top:178.5px;width:150px;height:22px;overflow:hidden"><div class="t" style="left:0;top:2.2px;font-size:17.4px;color:#f0f0f0">caja fuerte del capitán</div></div>
<svg class="a" style="left:12px;top:210.1px" width="13" height="13" viewBox="0 0 13 13"><rect width="13" height="13" fill="#fff"/></svg>
<div class="a" style="left:33px;top:206.6px;width:150px;height:22px;overflow:hidden"><div class="t" style="left:0;top:2.2px;font-size:17.4px;color:#f0f0f0">capullo alien</div></div>
<svg class="a" style="left:12px;top:238.2px" width="13" height="13" viewBox="0 0 13 13"><rect width="13" height="13" fill="#fff"/></svg>
<div class="a" style="left:33px;top:234.7px;width:150px;height:22px;overflow:hidden"><div class="t" style="left:0;top:2.2px;font-size:17.4px;color:#f0f0f0">casco de piloto (30)</div></div>
</div>
<div class="t" style="left:1641px;top:900.5px;font-size:17px;color:#8a8a8a">Cant:</div>
<div class="a" style="left:1685px;top:895px;width:50px;height:26px;background:#333;border:1px solid #555"></div>
<div class="t" style="left:1690px;top:900.5px;font-size:17px;color:#f0f0f0">1</div>
<div class="t" style="left:1739px;top:904.1px;font-size:10px;color:#777">(-1 = ∞)</div>
<div class="t" style="left:1448px;top:1131.9px;font-size:17px;font-weight:bold;color:#d0d0d0;letter-spacing:-0.1px">Multiplicador compra</div>
<div class="a" style="left:1448px;top:1155px;width:372px;height:26px;background:#dddddd;border:1px solid #cfcfcf"></div>
<div class="t" style="left:1450px;top:1161.0px;font-size:17.4px;color:#111">0,5</div>
<div class="t" style="left:1448px;top:1196.9px;font-size:17px;font-weight:bold;color:#d0d0d0;letter-spacing:-0.1px">Multiplicador venta</div>
<div class="a" style="left:1448px;top:1220px;width:372px;height:26px;background:#dddddd;border:1px solid #cfcfcf"></div>
<div class="t" style="left:1450px;top:1226.0px;font-size:17.4px;color:#111">1,3</div>
</body></html>
